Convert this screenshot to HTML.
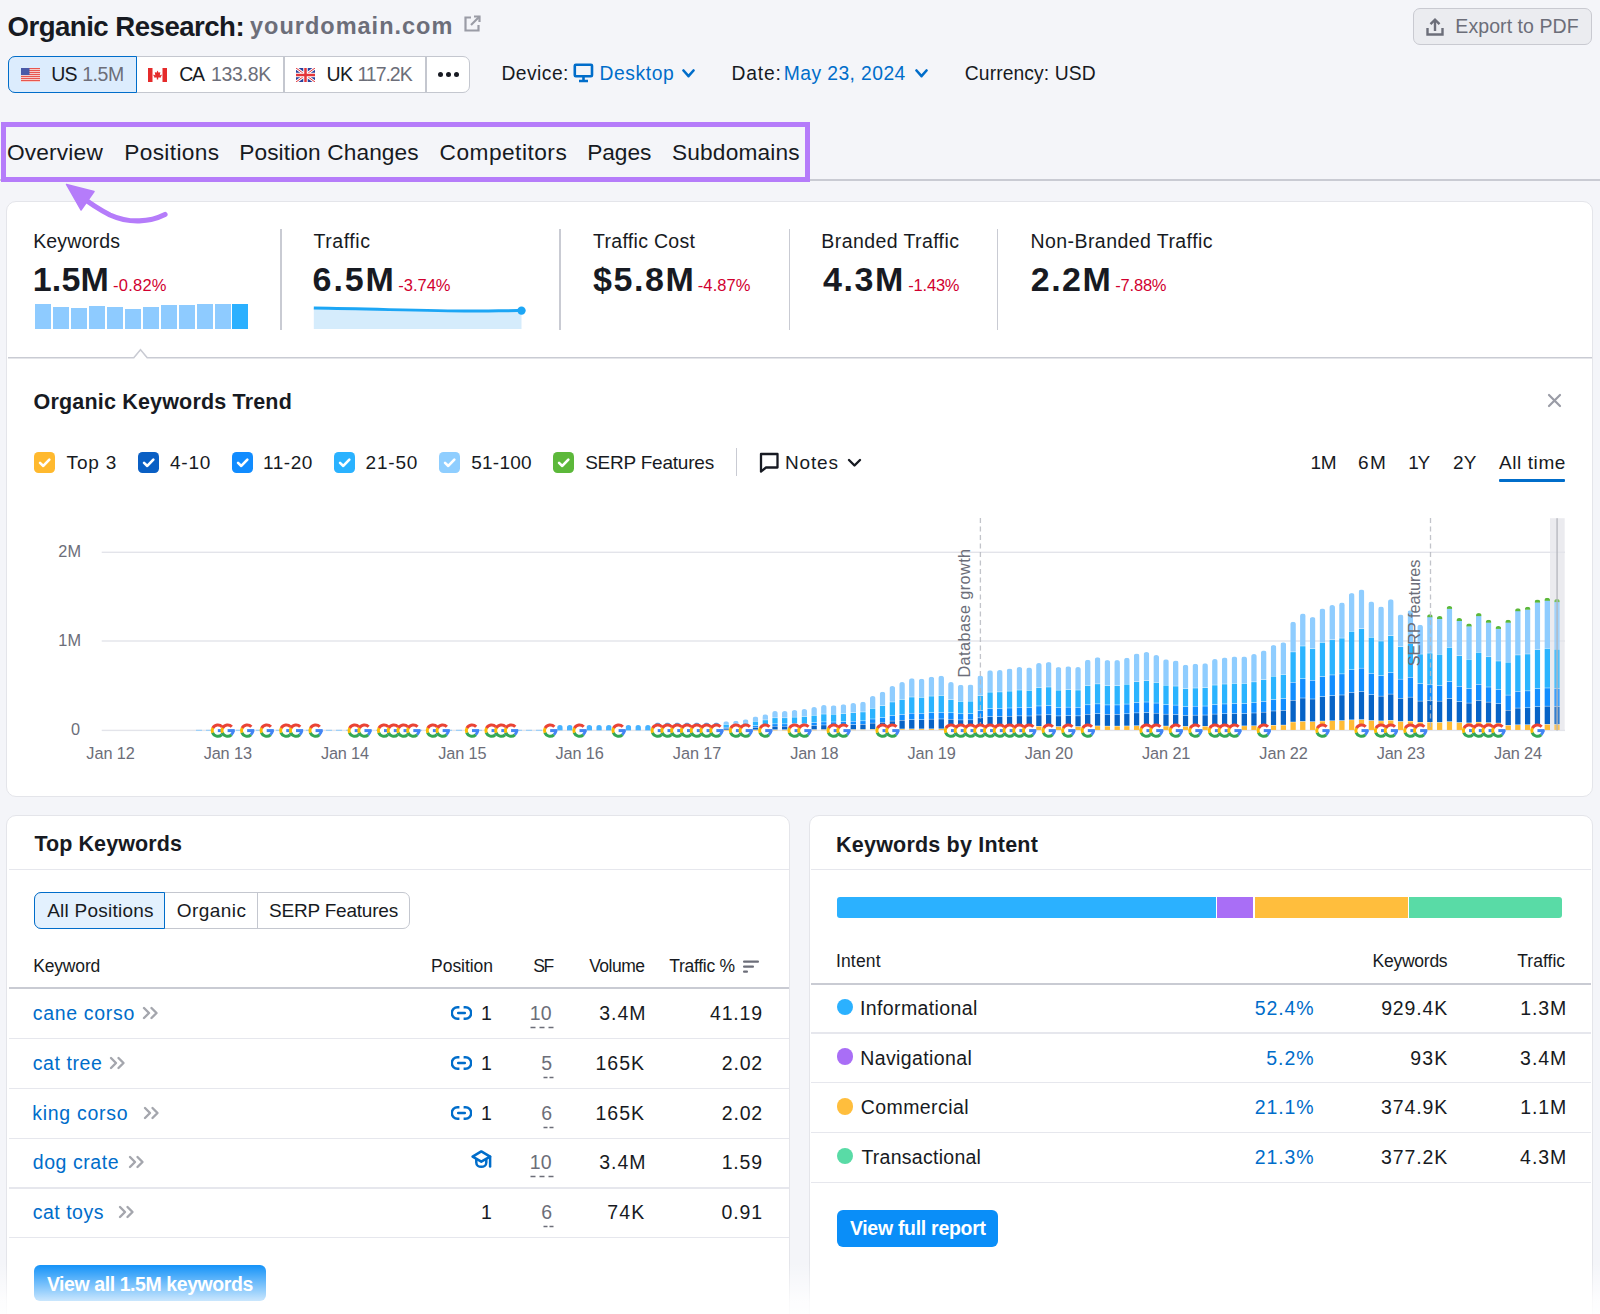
<!DOCTYPE html>
<html><head><meta charset="utf-8"><style>
html,body{margin:0;padding:0;}
body{width:1600px;height:1314px;overflow:hidden;position:relative;background:#f4f5f9;font-family:"Liberation Sans",sans-serif;}
.t{position:absolute;white-space:nowrap;line-height:1;}
</style></head><body>
<div class="t" style="left:7.50px;top:13.24px;font-size:27.6px;color:#171a22;font-weight:700;letter-spacing:-0.515px;">Organic Research:</div>
<div class="t" style="left:250.06px;top:14.51px;font-size:23.5px;color:#6c6e79;font-weight:700;letter-spacing:0.995px;">yourdomain.com</div>
<svg style="position:absolute;left:462px;top:14px" width="20" height="20" viewBox="0 0 20 20" fill="none" stroke="#9a9ca6" stroke-width="2.2">
<path d="M9 3.5H3.5v13h13V11"/><path d="M12 2.5h5.5V8"/><path d="M17.5 2.5L9 11"/></svg>
<div style="position:absolute;left:1413.00px;top:8.00px;width:179.00px;height:36.50px;box-sizing:border-box;border:1.5px solid #c9cad1;border-radius:7px;background:#ebecf0;"></div>
<svg style="position:absolute;left:1425px;top:17px" width="20" height="20" viewBox="0 0 20 20" fill="none" stroke="#6c6e79" stroke-width="2.4">
<path d="M2.5 11v6.5h15V11"/><path d="M10 14V3"/><path d="M5.5 7.2L10 2.7l4.5 4.5"/></svg>
<div class="t" style="left:1455.34px;top:16.59px;font-size:19.5px;color:#6c6e79;letter-spacing:0.073px;">Export to PDF</div>
<div style="position:absolute;left:7.50px;top:56.00px;width:462.00px;height:36.50px;box-sizing:border-box;border:1.5px solid #c4c7cf;border-radius:7px;background:#fff;"></div>
<div style="position:absolute;left:7.50px;top:56.00px;width:129.00px;height:36.50px;box-sizing:border-box;border:1.5px solid #006dca;border-radius:7px 0 0 7px;background:#dcecfd;"></div>
<div style="position:absolute;left:283.00px;top:57.00px;width:1.50px;height:34.50px;background:#c4c7cf;"></div>
<div style="position:absolute;left:425.00px;top:57.00px;width:1.50px;height:34.50px;background:#c4c7cf;"></div>
<svg style="position:absolute;left:21px;top:68.3px" width="19" height="14" viewBox="0 0 19 14"><rect x="0" y="0" width="19" height="1.1" fill="#e8564f"/><rect x="0" y="1.1" width="19" height="0.9" fill="#f7c9c6"/><rect x="0" y="2" width="19" height="1.1" fill="#e8564f"/><rect x="0" y="3.1" width="19" height="0.9" fill="#f7c9c6"/><rect x="0" y="4" width="19" height="1.1" fill="#e8564f"/><rect x="0" y="5.1" width="19" height="0.9" fill="#f7c9c6"/><rect x="0" y="6" width="19" height="1.1" fill="#e8564f"/><rect x="0" y="7.1" width="19" height="0.9" fill="#f7c9c6"/><rect x="0" y="8" width="19" height="1.1" fill="#e8564f"/><rect x="0" y="9.1" width="19" height="0.9" fill="#f7c9c6"/><rect x="0" y="10" width="19" height="1.1" fill="#e8564f"/><rect x="0" y="11.1" width="19" height="0.9" fill="#f7c9c6"/><rect x="0" y="12" width="19" height="1.1" fill="#e8564f"/><rect x="0" y="13.1" width="19" height="0.9" fill="#f7c9c6"/><rect x="0" y="0" width="8.5" height="7" fill="#4a5aa8"/></svg>
<svg style="position:absolute;left:148.4px;top:68.3px" width="19" height="14" viewBox="0 0 19 14">
<rect width="19" height="14" fill="#fff"/><rect width="4.5" height="14" fill="#e52b2b"/><rect x="14.5" width="4.5" height="14" fill="#e52b2b"/>
<path d="M9.5 2.5l1.2 2.3 1.6-.7-.5 3.5 1.6-1 .4 1-1 1.2 .3.8h-2.9v2h-1.4v-2H6l.3-.8-1-1.2.4-1 1.6 1-.5-3.5 1.6.7z" fill="#e52b2b"/></svg>
<svg style="position:absolute;left:296.4px;top:68.3px" width="19" height="14" viewBox="0 0 19 14">
<rect width="19" height="14" fill="#2a3f9c"/><path d="M0 0L19 14M19 0L0 14" stroke="#fff" stroke-width="3"/><path d="M0 0L19 14M19 0L0 14" stroke="#e3343a" stroke-width="1"/>
<path d="M9.5 0v14M0 7h19" stroke="#fff" stroke-width="4.5"/><path d="M9.5 0v14M0 7h19" stroke="#e3343a" stroke-width="2.5"/></svg>
<div class="t" style="left:51.34px;top:65.29px;font-size:19.5px;color:#171a22;letter-spacing:-0.868px;">US</div>
<div class="t" style="left:82.14px;top:65.29px;font-size:19.5px;color:#6c6e79;letter-spacing:-0.389px;">1.5M</div>
<div class="t" style="left:179.29px;top:65.29px;font-size:19.5px;color:#171a22;letter-spacing:-1.365px;">CA</div>
<div class="t" style="left:211.04px;top:65.29px;font-size:19.5px;color:#6c6e79;letter-spacing:-0.332px;">133.8K</div>
<div class="t" style="left:326.54px;top:65.29px;font-size:19.5px;color:#171a22;letter-spacing:-0.650px;">UK</div>
<div class="t" style="left:357.44px;top:65.29px;font-size:19.5px;color:#6c6e79;letter-spacing:-1.019px;">117.2K</div>
<div style="position:absolute;left:437.60px;top:71.80px;width:5.60px;height:5.60px;border-radius:50%;background:#171a22;"></div>
<div style="position:absolute;left:445.60px;top:71.80px;width:5.60px;height:5.60px;border-radius:50%;background:#171a22;"></div>
<div style="position:absolute;left:453.60px;top:71.80px;width:5.60px;height:5.60px;border-radius:50%;background:#171a22;"></div>
<div class="t" style="left:501.46px;top:63.66px;font-size:19.3px;color:#171a22;letter-spacing:0.452px;">Device:</div>
<svg style="position:absolute;left:573px;top:63px" width="21" height="20" viewBox="0 0 21 20" fill="none" stroke="#006dca" stroke-width="2.6">
<rect x="1.8" y="1.8" width="17.2" height="11.5" rx="1"/><path d="M10.5 14v3.5M6 18h9" /></svg>
<div class="t" style="left:599.46px;top:63.66px;font-size:19.3px;color:#006dca;letter-spacing:0.597px;">Desktop</div>
<svg style="position:absolute;left:682px;top:69px" width="13" height="10.2" viewBox="0 0 13 10.2" fill="none" stroke="#006dca" stroke-width="2.6" stroke-linecap="round" stroke-linejoin="round">
<path d="M1.5 1.5L6.5 7.2L11.5 1.5"/></svg>
<div class="t" style="left:731.46px;top:63.66px;font-size:19.3px;color:#171a22;letter-spacing:0.813px;">Date:</div>
<div class="t" style="left:783.76px;top:63.66px;font-size:19.3px;color:#006dca;letter-spacing:0.424px;">May 23, 2024</div>
<svg style="position:absolute;left:915px;top:69px" width="13" height="10.2" viewBox="0 0 13 10.2" fill="none" stroke="#006dca" stroke-width="2.6" stroke-linecap="round" stroke-linejoin="round">
<path d="M1.5 1.5L6.5 7.2L11.5 1.5"/></svg>
<div class="t" style="left:964.83px;top:63.66px;font-size:19.3px;color:#171a22;letter-spacing:0.095px;">Currency: USD</div>
<div style="position:absolute;left:0.00px;top:179.00px;width:1600.00px;height:1.50px;background:#c9cbd3;"></div>
<div style="position:absolute;left:1.20px;top:121.50px;width:808.40px;height:60.00px;box-sizing:border-box;border:5px solid #b57cfa;"></div>
<div class="t" style="left:6.88px;top:140.78px;font-size:22.7px;color:#171a22;letter-spacing:0.195px;">Overview</div>
<div class="t" style="left:124.18px;top:140.78px;font-size:22.7px;color:#171a22;letter-spacing:0.356px;">Positions</div>
<div class="t" style="left:239.18px;top:140.78px;font-size:22.7px;color:#171a22;letter-spacing:0.110px;">Position Changes</div>
<div class="t" style="left:439.56px;top:140.78px;font-size:22.7px;color:#171a22;letter-spacing:0.488px;">Competitors</div>
<div class="t" style="left:587.18px;top:140.78px;font-size:22.7px;color:#171a22;letter-spacing:-0.036px;">Pages</div>
<div class="t" style="left:671.98px;top:140.78px;font-size:22.7px;color:#171a22;letter-spacing:0.178px;">Subdomains</div>
<div style="position:absolute;left:6.40px;top:200.70px;width:1586.40px;height:596.50px;box-sizing:border-box;border:1.3px solid #e4e5ea;border-radius:10px;background:#fff;"></div>
<div class="t" style="left:33.14px;top:231.69px;font-size:19.5px;color:#171a22;letter-spacing:0.191px;">Keywords</div>
<div class="t" style="left:313.41px;top:231.69px;font-size:19.5px;color:#171a22;letter-spacing:0.590px;">Traffic</div>
<div class="t" style="left:593.11px;top:231.69px;font-size:19.5px;color:#171a22;letter-spacing:0.292px;">Traffic Cost</div>
<div class="t" style="left:821.34px;top:231.69px;font-size:19.5px;color:#171a22;letter-spacing:0.409px;">Branded Traffic</div>
<div class="t" style="left:1030.44px;top:231.69px;font-size:19.5px;color:#171a22;letter-spacing:0.440px;">Non-Branded Traffic</div>
<div class="t" style="left:32.66px;top:262.22px;font-size:34px;color:#171a22;font-weight:700;letter-spacing:0.190px;">1.5M</div>
<div class="t" style="left:312.61px;top:262.22px;font-size:34px;color:#171a22;font-weight:700;letter-spacing:1.907px;">6.5M</div>
<div class="t" style="left:592.99px;top:262.22px;font-size:34px;color:#171a22;font-weight:700;letter-spacing:1.593px;">$5.8M</div>
<div class="t" style="left:822.99px;top:262.22px;font-size:34px;color:#171a22;font-weight:700;letter-spacing:1.580px;">4.3M</div>
<div class="t" style="left:1030.81px;top:262.22px;font-size:34px;color:#171a22;font-weight:700;letter-spacing:1.440px;">2.2M</div>
<div class="t" style="left:113.06px;top:277.03px;font-size:16.5px;color:#d1002f;letter-spacing:0.243px;">-0.82%</div>
<div class="t" style="left:398.26px;top:277.03px;font-size:16.5px;color:#d1002f;">-3.74%</div>
<div class="t" style="left:697.76px;top:277.03px;font-size:16.5px;color:#d1002f;letter-spacing:0.103px;">-4.87%</div>
<div class="t" style="left:908.26px;top:277.03px;font-size:16.5px;color:#d1002f;letter-spacing:-0.197px;">-1.43%</div>
<div class="t" style="left:1115.26px;top:277.03px;font-size:16.5px;color:#d1002f;letter-spacing:-0.197px;">-7.88%</div>
<div style="position:absolute;left:280.05px;top:228.60px;width:1.50px;height:101.40px;background:#c9cbd3;"></div>
<div style="position:absolute;left:559.05px;top:228.60px;width:1.50px;height:101.40px;background:#c9cbd3;"></div>
<div style="position:absolute;left:788.75px;top:228.60px;width:1.50px;height:101.40px;background:#c9cbd3;"></div>
<div style="position:absolute;left:996.95px;top:228.60px;width:1.50px;height:101.40px;background:#c9cbd3;"></div>
<div style="position:absolute;left:34.70px;top:304.40px;width:16.00px;height:24.60px;background:#8ecbff;"></div>
<div style="position:absolute;left:52.68px;top:307.00px;width:16.00px;height:22.00px;background:#8ecbff;"></div>
<div style="position:absolute;left:70.66px;top:308.00px;width:16.00px;height:21.00px;background:#8ecbff;"></div>
<div style="position:absolute;left:88.64px;top:306.00px;width:16.00px;height:23.00px;background:#8ecbff;"></div>
<div style="position:absolute;left:106.62px;top:307.00px;width:16.00px;height:22.00px;background:#8ecbff;"></div>
<div style="position:absolute;left:124.60px;top:308.50px;width:16.00px;height:20.50px;background:#8ecbff;"></div>
<div style="position:absolute;left:142.58px;top:307.00px;width:16.00px;height:22.00px;background:#8ecbff;"></div>
<div style="position:absolute;left:160.56px;top:304.70px;width:16.00px;height:24.30px;background:#8ecbff;"></div>
<div style="position:absolute;left:178.54px;top:304.70px;width:16.00px;height:24.30px;background:#8ecbff;"></div>
<div style="position:absolute;left:196.52px;top:303.80px;width:16.00px;height:25.20px;background:#8ecbff;"></div>
<div style="position:absolute;left:214.50px;top:303.80px;width:16.00px;height:25.20px;background:#8ecbff;"></div>
<div style="position:absolute;left:232.48px;top:303.80px;width:16.00px;height:25.20px;background:#2bb0ff;"></div>
<svg style="position:absolute;left:0;top:290px" width="560" height="45" viewBox="0 290 560 45">
<path d="M313.8 308 C380 309 440 311.5 480 311 C500 310.8 510 310.5 521.5 310.6 L521.5 329 L313.8 329 Z" fill="#d5ecfc"/>
<path d="M313.8 308 C380 309 440 311.5 480 311 C500 310.8 510 310.5 521.5 310.6" fill="none" stroke="#1ca6f5" stroke-width="3"/>
<circle cx="521.5" cy="310.6" r="4.2" fill="#1ca6f5"/></svg>
<svg style="position:absolute;left:7.5px;top:345px" width="1584.5" height="16" viewBox="7.5 345 1584.5 16">
<path d="M7.5 357.8 L133.3 357.8 L140 349.8 L146.7 357.8 L1592 357.8" fill="none" stroke="#c9cbd3" stroke-width="1.6"/>
<path d="M134.3 358.6 L140 351.6 L145.7 358.6 Z" fill="#fff"/></svg>
<svg style="position:absolute;left:0;top:175px" width="200" height="60" viewBox="0 175 200 60">
<path d="M165 214.5 C150 222 130 224 110 215 C98 209 88 202 76 193" fill="none" stroke="#b57cfa" stroke-width="5.2" stroke-linecap="round"/>
<path d="M66.5 184.5 L94 191.5 L81 210 Z" fill="#b57cfa" stroke="#b57cfa" stroke-width="1.5" stroke-linejoin="round"/></svg>
<div class="t" style="left:33.54px;top:392.00px;font-size:21.5px;color:#171a22;font-weight:700;letter-spacing:0.181px;">Organic Keywords Trend</div>
<svg style="position:absolute;left:1547px;top:393px" width="15" height="15" viewBox="0 0 15 15" stroke="#9a9ca6" stroke-width="2.2" stroke-linecap="round"><path d="M2 2L13 13M13 2L2 13"/></svg>
<div style="position:absolute;left:34.00px;top:452.00px;width:21.20px;height:21.20px;border-radius:4.5px;background:#ffb92e;"></div>
<svg style="position:absolute;left:34px;top:452px" width="21.2" height="21.2" viewBox="0 0 21 21" fill="none" stroke="#fff" stroke-width="2.6" stroke-linecap="round" stroke-linejoin="round"><path d="M6 10.8L9.2 13.8L15.2 7.6"/></svg>
<div class="t" style="left:66.62px;top:452.52px;font-size:19px;color:#171a22;letter-spacing:0.821px;">Top 3</div>
<div style="position:absolute;left:137.60px;top:452.00px;width:21.20px;height:21.20px;border-radius:4.5px;background:#0a5fc4;"></div>
<svg style="position:absolute;left:137.6px;top:452px" width="21.2" height="21.2" viewBox="0 0 21 21" fill="none" stroke="#fff" stroke-width="2.6" stroke-linecap="round" stroke-linejoin="round"><path d="M6 10.8L9.2 13.8L15.2 7.6"/></svg>
<div class="t" style="left:170.02px;top:452.52px;font-size:19px;color:#171a22;letter-spacing:0.748px;">4-10</div>
<div style="position:absolute;left:232.00px;top:452.00px;width:21.20px;height:21.20px;border-radius:4.5px;background:#118cff;"></div>
<svg style="position:absolute;left:232px;top:452px" width="21.2" height="21.2" viewBox="0 0 21 21" fill="none" stroke="#fff" stroke-width="2.6" stroke-linecap="round" stroke-linejoin="round"><path d="M6 10.8L9.2 13.8L15.2 7.6"/></svg>
<div class="t" style="left:262.97px;top:452.52px;font-size:19px;color:#171a22;letter-spacing:0.543px;">11-20</div>
<div style="position:absolute;left:334.00px;top:452.00px;width:21.20px;height:21.20px;border-radius:4.5px;background:#2ab2ff;"></div>
<svg style="position:absolute;left:334px;top:452px" width="21.2" height="21.2" viewBox="0 0 21 21" fill="none" stroke="#fff" stroke-width="2.6" stroke-linecap="round" stroke-linejoin="round"><path d="M6 10.8L9.2 13.8L15.2 7.6"/></svg>
<div class="t" style="left:365.55px;top:452.52px;font-size:19px;color:#171a22;letter-spacing:0.793px;">21-50</div>
<div style="position:absolute;left:439.00px;top:452.00px;width:21.20px;height:21.20px;border-radius:4.5px;background:#8fceff;"></div>
<svg style="position:absolute;left:439px;top:452px" width="21.2" height="21.2" viewBox="0 0 21 21" fill="none" stroke="#fff" stroke-width="2.6" stroke-linecap="round" stroke-linejoin="round"><path d="M6 10.8L9.2 13.8L15.2 7.6"/></svg>
<div class="t" style="left:471.24px;top:452.52px;font-size:19px;color:#171a22;letter-spacing:0.248px;">51-100</div>
<div style="position:absolute;left:553.00px;top:452.00px;width:21.20px;height:21.20px;border-radius:4.5px;background:#5cb83a;"></div>
<svg style="position:absolute;left:553px;top:452px" width="21.2" height="21.2" viewBox="0 0 21 21" fill="none" stroke="#fff" stroke-width="2.6" stroke-linecap="round" stroke-linejoin="round"><path d="M6 10.8L9.2 13.8L15.2 7.6"/></svg>
<div class="t" style="left:585.14px;top:452.52px;font-size:19px;color:#171a22;letter-spacing:-0.221px;">SERP Features</div>
<div style="position:absolute;left:736.00px;top:448.40px;width:1.30px;height:27.60px;background:#c9cbd3;"></div>
<svg style="position:absolute;left:758px;top:451px" width="22" height="23" viewBox="0 0 22 23" fill="none" stroke="#171a22" stroke-width="2.3" stroke-linejoin="round"><path d="M3 3H19.5V16.5H8L3 20.5Z"/></svg>
<div class="t" style="left:785.08px;top:452.52px;font-size:19px;color:#171a22;letter-spacing:0.824px;">Notes</div>
<svg style="position:absolute;left:847px;top:458px" width="15" height="10" viewBox="0 0 15 10" fill="none" stroke="#171a22" stroke-width="2.4" stroke-linecap="round" stroke-linejoin="round"><path d="M2 2L7.5 7.5L13 2"/></svg>
<div class="t" style="left:1310.38px;top:453.42px;font-size:19px;color:#171a22;letter-spacing:-0.270px;">1M</div>
<div class="t" style="left:1358.06px;top:453.42px;font-size:19px;color:#171a22;letter-spacing:1.330px;">6M</div>
<div class="t" style="left:1408.20px;top:453.42px;font-size:19px;color:#171a22;letter-spacing:-1.330px;">1Y</div>
<div class="t" style="left:1452.95px;top:453.42px;font-size:19px;color:#171a22;letter-spacing:0.250px;">2Y</div>
<div class="t" style="left:1499.00px;top:453.42px;font-size:19px;color:#171a22;letter-spacing:0.590px;">All time</div>
<div style="position:absolute;left:1499.00px;top:478.80px;width:66.00px;height:3.70px;background:#006dca;border-radius:1px;"></div>
<div class="t" style="left:58.33px;top:543.20px;font-size:16.3px;color:#6c6e79;">2M</div>
<div class="t" style="left:58.33px;top:631.80px;font-size:16.3px;color:#6c6e79;">1M</div>
<div class="t" style="left:71.12px;top:721.00px;font-size:16.3px;color:#6c6e79;">0</div>
<div class="t" style="left:86.36px;top:744.90px;font-size:16.3px;color:#6c6e79;letter-spacing:-0.088px;">Jan 12</div>
<div class="t" style="left:203.66px;top:744.90px;font-size:16.3px;color:#6c6e79;letter-spacing:-0.121px;">Jan 13</div>
<div class="t" style="left:320.96px;top:744.90px;font-size:16.3px;color:#6c6e79;letter-spacing:-0.153px;">Jan 14</div>
<div class="t" style="left:438.26px;top:744.90px;font-size:16.3px;color:#6c6e79;letter-spacing:-0.121px;">Jan 15</div>
<div class="t" style="left:555.56px;top:744.90px;font-size:16.3px;color:#6c6e79;letter-spacing:-0.121px;">Jan 16</div>
<div class="t" style="left:672.86px;top:744.90px;font-size:16.3px;color:#6c6e79;letter-spacing:-0.088px;">Jan 17</div>
<div class="t" style="left:790.16px;top:744.90px;font-size:16.3px;color:#6c6e79;letter-spacing:-0.121px;">Jan 18</div>
<div class="t" style="left:907.46px;top:744.90px;font-size:16.3px;color:#6c6e79;letter-spacing:-0.104px;">Jan 19</div>
<div class="t" style="left:1024.76px;top:744.90px;font-size:16.3px;color:#6c6e79;letter-spacing:-0.137px;">Jan 20</div>
<div class="t" style="left:1142.06px;top:744.90px;font-size:16.3px;color:#6c6e79;letter-spacing:-0.104px;">Jan 21</div>
<div class="t" style="left:1259.36px;top:744.90px;font-size:16.3px;color:#6c6e79;letter-spacing:-0.088px;">Jan 22</div>
<div class="t" style="left:1376.66px;top:744.90px;font-size:16.3px;color:#6c6e79;letter-spacing:-0.121px;">Jan 23</div>
<div class="t" style="left:1493.96px;top:744.90px;font-size:16.3px;color:#6c6e79;letter-spacing:-0.153px;">Jan 24</div>
<svg style="position:absolute;left:0;top:500px" width="1600" height="250" viewBox="0 500 1600 250">
<defs><g id="gg"><circle cx="0" cy="0" r="6" fill="#fff"/><path d="M5.65 -0.20A5.65 5.65 0 0 1 3.63 4.33" fill="none" stroke="#4285f4" stroke-width="3.0"/><path d="M3.78 4.20A5.65 5.65 0 0 1 -5.31 1.93" fill="none" stroke="#34a853" stroke-width="3.0"/><path d="M-5.24 2.12A5.65 5.65 0 0 1 -4.89 -2.83" fill="none" stroke="#fbbc05" stroke-width="3.0"/><path d="M-4.99 -2.65A5.65 5.65 0 0 1 4.20 -3.78" fill="none" stroke="#ea4335" stroke-width="3.0"/><rect x="0" y="-1.5" width="7.1" height="3" fill="#4285f4"/></g></defs>
<rect x="1550" y="518.2" width="14.7" height="212.4" fill="#ebebef"/>
<rect x="101.7" y="551.5999999999999" width="1463.3" height="1.4" fill="#e3e4ea"/>
<rect x="101.7" y="640.3" width="1463.3" height="1.4" fill="#e3e4ea"/>
<rect x="101.7" y="729.6999999999999" width="1463.3" height="1.4" fill="#e3e4ea"/>
<path d="M196 730.4H548" stroke="#9fd0f8" stroke-width="1.3" stroke-dasharray="6 4"/>
<g clip-path="url(#c45)"><clipPath id="c45"><rect x="547.38" y="724.90" width="5.6" height="9.50" rx="2.8"/></clipPath><rect x="547.38" y="724.90" width="5.6" height="5.50" fill="#47b2ff"/></g>
<g clip-path="url(#c46)"><clipPath id="c46"><rect x="557.15" y="724.90" width="5.6" height="9.50" rx="2.8"/></clipPath><rect x="557.15" y="724.90" width="5.6" height="5.50" fill="#47b2ff"/></g>
<g clip-path="url(#c47)"><clipPath id="c47"><rect x="566.93" y="724.90" width="5.6" height="9.50" rx="2.8"/></clipPath><rect x="566.93" y="724.90" width="5.6" height="5.50" fill="#47b2ff"/></g>
<g clip-path="url(#c48)"><clipPath id="c48"><rect x="576.70" y="724.90" width="5.6" height="9.50" rx="2.8"/></clipPath><rect x="576.70" y="724.90" width="5.6" height="5.50" fill="#47b2ff"/></g>
<g clip-path="url(#c49)"><clipPath id="c49"><rect x="586.48" y="724.90" width="5.6" height="9.50" rx="2.8"/></clipPath><rect x="586.48" y="724.90" width="5.6" height="5.50" fill="#47b2ff"/></g>
<g clip-path="url(#c50)"><clipPath id="c50"><rect x="596.25" y="724.90" width="5.6" height="9.50" rx="2.8"/></clipPath><rect x="596.25" y="724.90" width="5.6" height="5.50" fill="#47b2ff"/></g>
<g clip-path="url(#c51)"><clipPath id="c51"><rect x="606.03" y="724.90" width="5.6" height="9.50" rx="2.8"/></clipPath><rect x="606.03" y="724.90" width="5.6" height="5.50" fill="#47b2ff"/></g>
<g clip-path="url(#c52)"><clipPath id="c52"><rect x="615.80" y="724.90" width="5.6" height="9.50" rx="2.8"/></clipPath><rect x="615.80" y="724.90" width="5.6" height="5.50" fill="#47b2ff"/></g>
<g clip-path="url(#c53)"><clipPath id="c53"><rect x="625.58" y="724.90" width="5.6" height="9.50" rx="2.8"/></clipPath><rect x="625.58" y="724.90" width="5.6" height="5.50" fill="#47b2ff"/></g>
<g clip-path="url(#c54)"><clipPath id="c54"><rect x="635.35" y="724.90" width="5.6" height="9.50" rx="2.8"/></clipPath><rect x="635.35" y="724.90" width="5.6" height="5.50" fill="#47b2ff"/></g>
<g clip-path="url(#c55)"><clipPath id="c55"><rect x="645.12" y="724.90" width="5.6" height="9.50" rx="2.8"/></clipPath><rect x="645.12" y="724.90" width="5.6" height="5.50" fill="#47b2ff"/></g>
<g clip-path="url(#c56)"><clipPath id="c56"><rect x="654.90" y="722.40" width="5.6" height="12.00" rx="2.8"/></clipPath><rect x="654.90" y="722.40" width="5.6" height="8.00" fill="#47b2ff"/></g>
<g clip-path="url(#c57)"><clipPath id="c57"><rect x="664.68" y="722.40" width="5.6" height="12.00" rx="2.8"/></clipPath><rect x="664.68" y="722.40" width="5.6" height="8.00" fill="#47b2ff"/></g>
<g clip-path="url(#c58)"><clipPath id="c58"><rect x="674.45" y="722.40" width="5.6" height="12.00" rx="2.8"/></clipPath><rect x="674.45" y="722.40" width="5.6" height="8.00" fill="#47b2ff"/></g>
<g clip-path="url(#c59)"><clipPath id="c59"><rect x="684.23" y="722.40" width="5.6" height="12.00" rx="2.8"/></clipPath><rect x="684.23" y="722.40" width="5.6" height="8.00" fill="#47b2ff"/></g>
<g clip-path="url(#c60)"><clipPath id="c60"><rect x="694.00" y="722.40" width="5.6" height="12.00" rx="2.8"/></clipPath><rect x="694.00" y="722.40" width="5.6" height="8.00" fill="#47b2ff"/></g>
<g clip-path="url(#c61)"><clipPath id="c61"><rect x="703.77" y="722.40" width="5.6" height="12.00" rx="2.8"/></clipPath><rect x="703.77" y="722.40" width="5.6" height="8.00" fill="#47b2ff"/></g>
<g clip-path="url(#c62)"><clipPath id="c62"><rect x="713.55" y="722.40" width="5.6" height="12.00" rx="2.8"/></clipPath><rect x="713.55" y="722.40" width="5.6" height="8.00" fill="#47b2ff"/></g>
<g clip-path="url(#c63)"><clipPath id="c63"><rect x="723.33" y="721.20" width="5.6" height="13.20" rx="2.8"/></clipPath><rect x="723.33" y="730.17" width="5.6" height="0.40" fill="#ffbb36"/><rect x="723.33" y="728.51" width="5.6" height="1.21" fill="#0763c6"/><rect x="723.33" y="727.41" width="5.6" height="0.65" fill="#128eff"/><rect x="723.33" y="724.56" width="5.6" height="2.40" fill="#2bb4ff"/><rect x="723.33" y="721.20" width="5.6" height="2.91" fill="#8fcdff"/></g>
<g clip-path="url(#c64)"><clipPath id="c64"><rect x="733.10" y="720.80" width="5.6" height="13.60" rx="2.8"/></clipPath><rect x="733.10" y="730.16" width="5.6" height="0.40" fill="#ffbb36"/><rect x="733.10" y="728.43" width="5.6" height="1.28" fill="#0763c6"/><rect x="733.10" y="727.28" width="5.6" height="0.70" fill="#128eff"/><rect x="733.10" y="724.30" width="5.6" height="2.53" fill="#2bb4ff"/><rect x="733.10" y="720.80" width="5.6" height="3.05" fill="#8fcdff"/></g>
<g clip-path="url(#c65)"><clipPath id="c65"><rect x="742.88" y="719.30" width="5.6" height="15.10" rx="2.8"/></clipPath><rect x="742.88" y="730.12" width="5.6" height="0.40" fill="#ffbb36"/><rect x="742.88" y="728.12" width="5.6" height="1.55" fill="#0763c6"/><rect x="742.88" y="726.79" width="5.6" height="0.88" fill="#128eff"/><rect x="742.88" y="723.35" width="5.6" height="2.99" fill="#2bb4ff"/><rect x="742.88" y="719.30" width="5.6" height="3.60" fill="#8fcdff"/></g>
<g clip-path="url(#c66)"><clipPath id="c66"><rect x="752.65" y="716.40" width="5.6" height="18.00" rx="2.8"/></clipPath><rect x="752.65" y="730.05" width="5.6" height="0.40" fill="#ffbb36"/><rect x="752.65" y="727.53" width="5.6" height="2.07" fill="#0763c6"/><rect x="752.65" y="725.85" width="5.6" height="1.23" fill="#128eff"/><rect x="752.65" y="721.51" width="5.6" height="3.89" fill="#2bb4ff"/><rect x="752.65" y="716.40" width="5.6" height="4.66" fill="#8fcdff"/></g>
<g clip-path="url(#c67)"><clipPath id="c67"><rect x="762.43" y="714.30" width="5.6" height="20.10" rx="2.8"/></clipPath><rect x="762.43" y="730.00" width="5.6" height="0.40" fill="#ffbb36"/><rect x="762.43" y="727.10" width="5.6" height="2.45" fill="#0763c6"/><rect x="762.43" y="725.17" width="5.6" height="1.48" fill="#128eff"/><rect x="762.43" y="720.18" width="5.6" height="4.54" fill="#2bb4ff"/><rect x="762.43" y="714.30" width="5.6" height="5.43" fill="#8fcdff"/></g>
<g clip-path="url(#c68)"><clipPath id="c68"><rect x="772.20" y="711.00" width="5.6" height="23.40" rx="2.8"/></clipPath><rect x="772.20" y="729.91" width="5.6" height="0.40" fill="#ffbb36"/><rect x="772.20" y="726.42" width="5.6" height="3.04" fill="#0763c6"/><rect x="772.20" y="724.10" width="5.6" height="1.88" fill="#128eff"/><rect x="772.20" y="718.08" width="5.6" height="5.56" fill="#2bb4ff"/><rect x="772.20" y="711.00" width="5.6" height="6.63" fill="#8fcdff"/></g>
<g clip-path="url(#c69)"><clipPath id="c69"><rect x="781.98" y="711.00" width="5.6" height="23.40" rx="2.8"/></clipPath><rect x="781.98" y="729.91" width="5.6" height="0.40" fill="#ffbb36"/><rect x="781.98" y="726.42" width="5.6" height="3.04" fill="#0763c6"/><rect x="781.98" y="724.10" width="5.6" height="1.88" fill="#128eff"/><rect x="781.98" y="718.08" width="5.6" height="5.56" fill="#2bb4ff"/><rect x="781.98" y="711.00" width="5.6" height="6.63" fill="#8fcdff"/></g>
<g clip-path="url(#c70)"><clipPath id="c70"><rect x="791.75" y="709.90" width="5.6" height="24.50" rx="2.8"/></clipPath><rect x="791.75" y="729.89" width="5.6" height="0.40" fill="#ffbb36"/><rect x="791.75" y="726.20" width="5.6" height="3.24" fill="#0763c6"/><rect x="791.75" y="723.74" width="5.6" height="2.01" fill="#128eff"/><rect x="791.75" y="717.38" width="5.6" height="5.90" fill="#2bb4ff"/><rect x="791.75" y="709.90" width="5.6" height="7.03" fill="#8fcdff"/></g>
<g clip-path="url(#c71)"><clipPath id="c71"><rect x="801.52" y="709.00" width="5.6" height="25.40" rx="2.8"/></clipPath><rect x="801.52" y="729.87" width="5.6" height="0.40" fill="#ffbb36"/><rect x="801.52" y="726.01" width="5.6" height="3.40" fill="#0763c6"/><rect x="801.52" y="723.45" width="5.6" height="2.12" fill="#128eff"/><rect x="801.52" y="716.81" width="5.6" height="6.18" fill="#2bb4ff"/><rect x="801.52" y="709.00" width="5.6" height="7.36" fill="#8fcdff"/></g>
<g clip-path="url(#c72)"><clipPath id="c72"><rect x="811.30" y="707.00" width="5.6" height="27.40" rx="2.8"/></clipPath><rect x="811.30" y="729.81" width="5.6" height="0.40" fill="#ffbb36"/><rect x="811.30" y="725.60" width="5.6" height="3.76" fill="#0763c6"/><rect x="811.30" y="722.79" width="5.6" height="2.36" fill="#128eff"/><rect x="811.30" y="715.54" width="5.6" height="6.80" fill="#2bb4ff"/><rect x="811.30" y="707.00" width="5.6" height="8.09" fill="#8fcdff"/></g>
<g clip-path="url(#c73)"><clipPath id="c73"><rect x="821.08" y="705.00" width="5.6" height="29.40" rx="2.8"/></clipPath><rect x="821.08" y="729.76" width="5.6" height="0.40" fill="#ffbb36"/><rect x="821.08" y="725.19" width="5.6" height="4.12" fill="#0763c6"/><rect x="821.08" y="722.14" width="5.6" height="2.60" fill="#128eff"/><rect x="821.08" y="714.27" width="5.6" height="7.42" fill="#2bb4ff"/><rect x="821.08" y="705.00" width="5.6" height="8.82" fill="#8fcdff"/></g>
<g clip-path="url(#c74)"><clipPath id="c74"><rect x="830.85" y="705.30" width="5.6" height="29.10" rx="2.8"/></clipPath><rect x="830.85" y="729.77" width="5.6" height="0.40" fill="#ffbb36"/><rect x="830.85" y="725.25" width="5.6" height="4.07" fill="#0763c6"/><rect x="830.85" y="722.24" width="5.6" height="2.56" fill="#128eff"/><rect x="830.85" y="714.46" width="5.6" height="7.33" fill="#2bb4ff"/><rect x="830.85" y="705.30" width="5.6" height="8.71" fill="#8fcdff"/></g>
<g clip-path="url(#c75)"><clipPath id="c75"><rect x="840.62" y="704.20" width="5.6" height="30.20" rx="2.8"/></clipPath><rect x="840.62" y="729.75" width="5.6" height="0.40" fill="#ffbb36"/><rect x="840.62" y="725.03" width="5.6" height="4.27" fill="#0763c6"/><rect x="840.62" y="721.88" width="5.6" height="2.69" fill="#128eff"/><rect x="840.62" y="713.76" width="5.6" height="7.67" fill="#2bb4ff"/><rect x="840.62" y="704.20" width="5.6" height="9.11" fill="#8fcdff"/></g>
<g clip-path="url(#c76)"><clipPath id="c76"><rect x="850.40" y="703.00" width="5.6" height="31.40" rx="2.8"/></clipPath><rect x="850.40" y="729.72" width="5.6" height="0.40" fill="#ffbb36"/><rect x="850.40" y="724.78" width="5.6" height="4.48" fill="#0763c6"/><rect x="850.40" y="721.50" width="5.6" height="2.84" fill="#128eff"/><rect x="850.40" y="713.00" width="5.6" height="8.04" fill="#2bb4ff"/><rect x="850.40" y="703.00" width="5.6" height="9.55" fill="#8fcdff"/></g>
<g clip-path="url(#c77)"><clipPath id="c77"><rect x="860.18" y="701.70" width="5.6" height="32.70" rx="2.8"/></clipPath><rect x="860.18" y="729.68" width="5.6" height="0.40" fill="#ffbb36"/><rect x="860.18" y="724.52" width="5.6" height="4.72" fill="#0763c6"/><rect x="860.18" y="721.07" width="5.6" height="2.99" fill="#128eff"/><rect x="860.18" y="712.18" width="5.6" height="8.45" fill="#2bb4ff"/><rect x="860.18" y="701.70" width="5.6" height="10.03" fill="#8fcdff"/></g>
<g clip-path="url(#c78)"><clipPath id="c78"><rect x="869.95" y="696.00" width="5.6" height="38.40" rx="2.8"/></clipPath><rect x="869.95" y="729.54" width="5.6" height="0.41" fill="#ffbb36"/><rect x="869.95" y="723.35" width="5.6" height="5.74" fill="#0763c6"/><rect x="869.95" y="719.22" width="5.6" height="3.68" fill="#128eff"/><rect x="869.95" y="708.56" width="5.6" height="10.21" fill="#2bb4ff"/><rect x="869.95" y="696.00" width="5.6" height="12.11" fill="#8fcdff"/></g>
<g clip-path="url(#c79)"><clipPath id="c79"><rect x="879.73" y="691.70" width="5.6" height="42.70" rx="2.8"/></clipPath><rect x="879.73" y="729.43" width="5.6" height="0.52" fill="#ffbb36"/><rect x="879.73" y="722.47" width="5.6" height="6.52" fill="#0763c6"/><rect x="879.73" y="717.82" width="5.6" height="4.19" fill="#128eff"/><rect x="879.73" y="705.83" width="5.6" height="11.55" fill="#2bb4ff"/><rect x="879.73" y="691.70" width="5.6" height="13.68" fill="#8fcdff"/></g>
<g clip-path="url(#c80)"><clipPath id="c80"><rect x="889.50" y="686.00" width="5.6" height="48.40" rx="2.8"/></clipPath><rect x="889.50" y="729.29" width="5.6" height="0.66" fill="#ffbb36"/><rect x="889.50" y="721.30" width="5.6" height="7.54" fill="#0763c6"/><rect x="889.50" y="715.97" width="5.6" height="4.88" fill="#128eff"/><rect x="889.50" y="702.21" width="5.6" height="13.31" fill="#2bb4ff"/><rect x="889.50" y="686.00" width="5.6" height="15.76" fill="#8fcdff"/></g>
<g clip-path="url(#c81)"><clipPath id="c81"><rect x="899.27" y="682.00" width="5.6" height="52.40" rx="2.8"/></clipPath><rect x="899.27" y="729.19" width="5.6" height="0.76" fill="#ffbb36"/><rect x="899.27" y="720.48" width="5.6" height="8.26" fill="#0763c6"/><rect x="899.27" y="714.67" width="5.6" height="5.36" fill="#128eff"/><rect x="899.27" y="699.67" width="5.6" height="14.55" fill="#2bb4ff"/><rect x="899.27" y="682.00" width="5.6" height="17.22" fill="#8fcdff"/></g>
<g clip-path="url(#c82)"><clipPath id="c82"><rect x="909.05" y="678.20" width="5.6" height="56.20" rx="2.8"/></clipPath><rect x="909.05" y="729.10" width="5.6" height="0.85" fill="#ffbb36"/><rect x="909.05" y="719.70" width="5.6" height="8.95" fill="#0763c6"/><rect x="909.05" y="713.44" width="5.6" height="5.81" fill="#128eff"/><rect x="909.05" y="697.25" width="5.6" height="15.73" fill="#2bb4ff"/><rect x="909.05" y="678.20" width="5.6" height="18.60" fill="#8fcdff"/></g>
<g clip-path="url(#c83)"><clipPath id="c83"><rect x="918.83" y="678.70" width="5.6" height="55.70" rx="2.8"/></clipPath><rect x="918.83" y="729.11" width="5.6" height="0.84" fill="#ffbb36"/><rect x="918.83" y="719.80" width="5.6" height="8.86" fill="#0763c6"/><rect x="918.83" y="713.60" width="5.6" height="5.75" fill="#128eff"/><rect x="918.83" y="697.57" width="5.6" height="15.58" fill="#2bb4ff"/><rect x="918.83" y="678.70" width="5.6" height="18.42" fill="#8fcdff"/></g>
<g clip-path="url(#c84)"><clipPath id="c84"><rect x="928.60" y="676.70" width="5.6" height="57.70" rx="2.8"/></clipPath><rect x="928.60" y="729.06" width="5.6" height="0.89" fill="#ffbb36"/><rect x="928.60" y="719.39" width="5.6" height="9.22" fill="#0763c6"/><rect x="928.60" y="712.95" width="5.6" height="5.99" fill="#128eff"/><rect x="928.60" y="696.30" width="5.6" height="16.20" fill="#2bb4ff"/><rect x="928.60" y="676.70" width="5.6" height="19.15" fill="#8fcdff"/></g>
<g clip-path="url(#c85)"><clipPath id="c85"><rect x="938.38" y="675.70" width="5.6" height="58.70" rx="2.8"/></clipPath><rect x="938.38" y="729.03" width="5.6" height="0.92" fill="#ffbb36"/><rect x="938.38" y="719.19" width="5.6" height="9.40" fill="#0763c6"/><rect x="938.38" y="712.62" width="5.6" height="6.11" fill="#128eff"/><rect x="938.38" y="695.67" width="5.6" height="16.51" fill="#2bb4ff"/><rect x="938.38" y="675.70" width="5.6" height="19.52" fill="#8fcdff"/></g>
<g clip-path="url(#c86)"><clipPath id="c86"><rect x="948.15" y="682.00" width="5.6" height="52.40" rx="2.8"/></clipPath><rect x="948.15" y="727.59" width="5.6" height="2.36" fill="#ffbb36"/><rect x="948.15" y="719.51" width="5.6" height="7.63" fill="#0763c6"/><rect x="948.15" y="713.02" width="5.6" height="6.04" fill="#128eff"/><rect x="948.15" y="699.81" width="5.6" height="12.76" fill="#2bb4ff"/><rect x="948.15" y="682.00" width="5.6" height="17.36" fill="#8fcdff"/></g>
<g clip-path="url(#c87)"><clipPath id="c87"><rect x="957.93" y="684.80" width="5.6" height="49.60" rx="2.8"/></clipPath><rect x="957.93" y="727.76" width="5.6" height="2.19" fill="#ffbb36"/><rect x="957.93" y="720.14" width="5.6" height="7.17" fill="#0763c6"/><rect x="957.93" y="714.03" width="5.6" height="5.66" fill="#128eff"/><rect x="957.93" y="701.58" width="5.6" height="12.00" fill="#2bb4ff"/><rect x="957.93" y="684.80" width="5.6" height="16.33" fill="#8fcdff"/></g>
<g clip-path="url(#c88)"><clipPath id="c88"><rect x="967.70" y="684.50" width="5.6" height="49.90" rx="2.8"/></clipPath><rect x="967.70" y="727.74" width="5.6" height="2.21" fill="#ffbb36"/><rect x="967.70" y="720.07" width="5.6" height="7.22" fill="#0763c6"/><rect x="967.70" y="713.92" width="5.6" height="5.70" fill="#128eff"/><rect x="967.70" y="701.39" width="5.6" height="12.08" fill="#2bb4ff"/><rect x="967.70" y="684.50" width="5.6" height="16.44" fill="#8fcdff"/></g>
<g clip-path="url(#c89)"><clipPath id="c89"><rect x="977.48" y="675.60" width="5.6" height="58.80" rx="2.8"/></clipPath><rect x="977.48" y="727.22" width="5.6" height="2.73" fill="#ffbb36"/><rect x="977.48" y="718.07" width="5.6" height="8.70" fill="#0763c6"/><rect x="977.48" y="710.73" width="5.6" height="6.89" fill="#128eff"/><rect x="977.48" y="695.77" width="5.6" height="14.51" fill="#2bb4ff"/><rect x="977.48" y="675.60" width="5.6" height="19.72" fill="#8fcdff"/></g>
<g clip-path="url(#c90)"><clipPath id="c90"><rect x="987.25" y="670.20" width="5.6" height="64.20" rx="2.8"/></clipPath><rect x="987.25" y="726.91" width="5.6" height="3.04" fill="#ffbb36"/><rect x="987.25" y="716.86" width="5.6" height="9.60" fill="#0763c6"/><rect x="987.25" y="708.79" width="5.6" height="7.62" fill="#128eff"/><rect x="987.25" y="692.35" width="5.6" height="15.98" fill="#2bb4ff"/><rect x="987.25" y="670.20" width="5.6" height="21.70" fill="#8fcdff"/></g>
<g clip-path="url(#c91)"><clipPath id="c91"><rect x="997.02" y="669.90" width="5.6" height="64.50" rx="2.8"/></clipPath><rect x="997.02" y="726.89" width="5.6" height="3.06" fill="#ffbb36"/><rect x="997.02" y="716.79" width="5.6" height="9.65" fill="#0763c6"/><rect x="997.02" y="708.68" width="5.6" height="7.66" fill="#128eff"/><rect x="997.02" y="692.16" width="5.6" height="16.07" fill="#2bb4ff"/><rect x="997.02" y="669.90" width="5.6" height="21.81" fill="#8fcdff"/></g>
<g clip-path="url(#c92)"><clipPath id="c92"><rect x="1006.80" y="668.60" width="5.6" height="65.80" rx="2.8"/></clipPath><rect x="1006.80" y="726.82" width="5.6" height="3.13" fill="#ffbb36"/><rect x="1006.80" y="716.50" width="5.6" height="9.87" fill="#0763c6"/><rect x="1006.80" y="708.21" width="5.6" height="7.83" fill="#128eff"/><rect x="1006.80" y="691.34" width="5.6" height="16.42" fill="#2bb4ff"/><rect x="1006.80" y="668.60" width="5.6" height="22.29" fill="#8fcdff"/></g>
<g clip-path="url(#c93)"><clipPath id="c93"><rect x="1016.58" y="666.90" width="5.6" height="67.50" rx="2.8"/></clipPath><rect x="1016.58" y="726.72" width="5.6" height="3.23" fill="#ffbb36"/><rect x="1016.58" y="716.11" width="5.6" height="10.15" fill="#0763c6"/><rect x="1016.58" y="707.60" width="5.6" height="8.06" fill="#128eff"/><rect x="1016.58" y="690.27" width="5.6" height="16.89" fill="#2bb4ff"/><rect x="1016.58" y="666.90" width="5.6" height="22.92" fill="#8fcdff"/></g>
<g clip-path="url(#c94)"><clipPath id="c94"><rect x="1026.35" y="667.40" width="5.6" height="67.00" rx="2.8"/></clipPath><rect x="1026.35" y="726.75" width="5.6" height="3.20" fill="#ffbb36"/><rect x="1026.35" y="716.23" width="5.6" height="10.07" fill="#0763c6"/><rect x="1026.35" y="707.78" width="5.6" height="7.99" fill="#128eff"/><rect x="1026.35" y="690.58" width="5.6" height="16.75" fill="#2bb4ff"/><rect x="1026.35" y="667.40" width="5.6" height="22.73" fill="#8fcdff"/></g>
<g clip-path="url(#c95)"><clipPath id="c95"><rect x="1036.12" y="663.00" width="5.6" height="71.40" rx="2.8"/></clipPath><rect x="1036.12" y="726.49" width="5.6" height="3.46" fill="#ffbb36"/><rect x="1036.12" y="715.23" width="5.6" height="10.81" fill="#0763c6"/><rect x="1036.12" y="706.20" width="5.6" height="8.58" fill="#128eff"/><rect x="1036.12" y="687.80" width="5.6" height="17.95" fill="#2bb4ff"/><rect x="1036.12" y="663.00" width="5.6" height="24.35" fill="#8fcdff"/></g>
<g clip-path="url(#c96)"><clipPath id="c96"><rect x="1045.90" y="662.10" width="5.6" height="72.30" rx="2.8"/></clipPath><rect x="1045.90" y="726.44" width="5.6" height="3.51" fill="#ffbb36"/><rect x="1045.90" y="715.03" width="5.6" height="10.96" fill="#0763c6"/><rect x="1045.90" y="705.88" width="5.6" height="8.70" fill="#128eff"/><rect x="1045.90" y="687.23" width="5.6" height="18.20" fill="#2bb4ff"/><rect x="1045.90" y="662.10" width="5.6" height="24.68" fill="#8fcdff"/></g>
<g clip-path="url(#c97)"><clipPath id="c97"><rect x="1055.68" y="667.10" width="5.6" height="67.30" rx="2.8"/></clipPath><rect x="1055.68" y="726.73" width="5.6" height="3.22" fill="#ffbb36"/><rect x="1055.68" y="716.16" width="5.6" height="10.12" fill="#0763c6"/><rect x="1055.68" y="707.68" width="5.6" height="8.03" fill="#128eff"/><rect x="1055.68" y="690.39" width="5.6" height="16.83" fill="#2bb4ff"/><rect x="1055.68" y="667.10" width="5.6" height="22.84" fill="#8fcdff"/></g>
<g clip-path="url(#c98)"><clipPath id="c98"><rect x="1065.45" y="666.30" width="5.6" height="68.10" rx="2.8"/></clipPath><rect x="1065.45" y="726.68" width="5.6" height="3.27" fill="#ffbb36"/><rect x="1065.45" y="715.98" width="5.6" height="10.25" fill="#0763c6"/><rect x="1065.45" y="707.39" width="5.6" height="8.14" fill="#128eff"/><rect x="1065.45" y="689.89" width="5.6" height="17.05" fill="#2bb4ff"/><rect x="1065.45" y="666.30" width="5.6" height="23.14" fill="#8fcdff"/></g>
<g clip-path="url(#c99)"><clipPath id="c99"><rect x="1075.23" y="666.90" width="5.6" height="67.50" rx="2.8"/></clipPath><rect x="1075.23" y="726.72" width="5.6" height="3.23" fill="#ffbb36"/><rect x="1075.23" y="716.11" width="5.6" height="10.15" fill="#0763c6"/><rect x="1075.23" y="707.60" width="5.6" height="8.06" fill="#128eff"/><rect x="1075.23" y="690.27" width="5.6" height="16.89" fill="#2bb4ff"/><rect x="1075.23" y="666.90" width="5.6" height="22.92" fill="#8fcdff"/></g>
<g clip-path="url(#c100)"><clipPath id="c100"><rect x="1085.00" y="659.80" width="5.6" height="74.60" rx="2.8"/></clipPath><rect x="1085.00" y="726.31" width="5.6" height="3.64" fill="#ffbb36"/><rect x="1085.00" y="714.51" width="5.6" height="11.34" fill="#0763c6"/><rect x="1085.00" y="705.05" width="5.6" height="9.01" fill="#128eff"/><rect x="1085.00" y="685.78" width="5.6" height="18.82" fill="#2bb4ff"/><rect x="1085.00" y="659.80" width="5.6" height="25.53" fill="#8fcdff"/></g>
<g clip-path="url(#c101)"><clipPath id="c101"><rect x="1094.78" y="657.20" width="5.6" height="77.20" rx="2.8"/></clipPath><rect x="1094.78" y="726.15" width="5.6" height="3.80" fill="#ffbb36"/><rect x="1094.78" y="713.93" width="5.6" height="11.77" fill="#0763c6"/><rect x="1094.78" y="704.12" width="5.6" height="9.36" fill="#128eff"/><rect x="1094.78" y="684.14" width="5.6" height="19.53" fill="#2bb4ff"/><rect x="1094.78" y="657.20" width="5.6" height="26.49" fill="#8fcdff"/></g>
<g clip-path="url(#c102)"><clipPath id="c102"><rect x="1104.55" y="660.10" width="5.6" height="74.30" rx="2.8"/></clipPath><rect x="1104.55" y="726.32" width="5.6" height="3.63" fill="#ffbb36"/><rect x="1104.55" y="714.58" width="5.6" height="11.29" fill="#0763c6"/><rect x="1104.55" y="705.16" width="5.6" height="8.97" fill="#128eff"/><rect x="1104.55" y="685.97" width="5.6" height="18.74" fill="#2bb4ff"/><rect x="1104.55" y="660.10" width="5.6" height="25.42" fill="#8fcdff"/></g>
<g clip-path="url(#c103)"><clipPath id="c103"><rect x="1114.33" y="660.10" width="5.6" height="74.30" rx="2.8"/></clipPath><rect x="1114.33" y="726.32" width="5.6" height="3.63" fill="#ffbb36"/><rect x="1114.33" y="714.58" width="5.6" height="11.29" fill="#0763c6"/><rect x="1114.33" y="705.16" width="5.6" height="8.97" fill="#128eff"/><rect x="1114.33" y="685.97" width="5.6" height="18.74" fill="#2bb4ff"/><rect x="1114.33" y="660.10" width="5.6" height="25.42" fill="#8fcdff"/></g>
<g clip-path="url(#c104)"><clipPath id="c104"><rect x="1124.10" y="657.70" width="5.6" height="76.70" rx="2.8"/></clipPath><rect x="1124.10" y="726.18" width="5.6" height="3.77" fill="#ffbb36"/><rect x="1124.10" y="714.04" width="5.6" height="11.69" fill="#0763c6"/><rect x="1124.10" y="704.30" width="5.6" height="9.29" fill="#128eff"/><rect x="1124.10" y="684.45" width="5.6" height="19.40" fill="#2bb4ff"/><rect x="1124.10" y="657.70" width="5.6" height="26.30" fill="#8fcdff"/></g>
<g clip-path="url(#c105)"><clipPath id="c105"><rect x="1133.88" y="653.60" width="5.6" height="80.80" rx="2.8"/></clipPath><rect x="1133.88" y="725.95" width="5.6" height="4.00" fill="#ffbb36"/><rect x="1133.88" y="713.12" width="5.6" height="12.38" fill="#0763c6"/><rect x="1133.88" y="702.83" width="5.6" height="9.84" fill="#128eff"/><rect x="1133.88" y="681.86" width="5.6" height="20.52" fill="#2bb4ff"/><rect x="1133.88" y="653.60" width="5.6" height="27.81" fill="#8fcdff"/></g>
<g clip-path="url(#c106)"><clipPath id="c106"><rect x="1143.65" y="652.00" width="5.6" height="82.40" rx="2.8"/></clipPath><rect x="1143.65" y="725.85" width="5.6" height="4.10" fill="#ffbb36"/><rect x="1143.65" y="712.76" width="5.6" height="12.64" fill="#0763c6"/><rect x="1143.65" y="702.25" width="5.6" height="10.06" fill="#128eff"/><rect x="1143.65" y="680.85" width="5.6" height="20.95" fill="#2bb4ff"/><rect x="1143.65" y="652.00" width="5.6" height="28.40" fill="#8fcdff"/></g>
<g clip-path="url(#c107)"><clipPath id="c107"><rect x="1153.42" y="654.90" width="5.6" height="79.50" rx="2.8"/></clipPath><rect x="1153.42" y="726.02" width="5.6" height="3.93" fill="#ffbb36"/><rect x="1153.42" y="713.41" width="5.6" height="12.16" fill="#0763c6"/><rect x="1153.42" y="703.30" width="5.6" height="9.67" fill="#128eff"/><rect x="1153.42" y="682.68" width="5.6" height="20.16" fill="#2bb4ff"/><rect x="1153.42" y="654.90" width="5.6" height="27.33" fill="#8fcdff"/></g>
<g clip-path="url(#c108)"><clipPath id="c108"><rect x="1163.20" y="659.30" width="5.6" height="75.10" rx="2.8"/></clipPath><rect x="1163.20" y="726.28" width="5.6" height="3.67" fill="#ffbb36"/><rect x="1163.20" y="714.40" width="5.6" height="11.42" fill="#0763c6"/><rect x="1163.20" y="704.88" width="5.6" height="9.08" fill="#128eff"/><rect x="1163.20" y="685.46" width="5.6" height="18.96" fill="#2bb4ff"/><rect x="1163.20" y="659.30" width="5.6" height="25.71" fill="#8fcdff"/></g>
<g clip-path="url(#c109)"><clipPath id="c109"><rect x="1172.98" y="660.60" width="5.6" height="73.80" rx="2.8"/></clipPath><rect x="1172.98" y="726.35" width="5.6" height="3.60" fill="#ffbb36"/><rect x="1172.98" y="714.69" width="5.6" height="11.21" fill="#0763c6"/><rect x="1172.98" y="705.34" width="5.6" height="8.90" fill="#128eff"/><rect x="1172.98" y="686.29" width="5.6" height="18.61" fill="#2bb4ff"/><rect x="1172.98" y="660.60" width="5.6" height="25.24" fill="#8fcdff"/></g>
<g clip-path="url(#c110)"><clipPath id="c110"><rect x="1182.75" y="664.70" width="5.6" height="69.70" rx="2.8"/></clipPath><rect x="1182.75" y="726.59" width="5.6" height="3.36" fill="#ffbb36"/><rect x="1182.75" y="715.62" width="5.6" height="10.52" fill="#0763c6"/><rect x="1182.75" y="706.81" width="5.6" height="8.35" fill="#128eff"/><rect x="1182.75" y="688.88" width="5.6" height="17.49" fill="#2bb4ff"/><rect x="1182.75" y="664.70" width="5.6" height="23.73" fill="#8fcdff"/></g>
<g clip-path="url(#c111)"><clipPath id="c111"><rect x="1192.53" y="663.70" width="5.6" height="70.70" rx="2.8"/></clipPath><rect x="1192.53" y="726.53" width="5.6" height="3.42" fill="#ffbb36"/><rect x="1192.53" y="715.39" width="5.6" height="10.69" fill="#0763c6"/><rect x="1192.53" y="706.45" width="5.6" height="8.49" fill="#128eff"/><rect x="1192.53" y="688.25" width="5.6" height="17.76" fill="#2bb4ff"/><rect x="1192.53" y="663.70" width="5.6" height="24.10" fill="#8fcdff"/></g>
<g clip-path="url(#c112)"><clipPath id="c112"><rect x="1202.30" y="663.20" width="5.6" height="71.20" rx="2.8"/></clipPath><rect x="1202.30" y="726.50" width="5.6" height="3.45" fill="#ffbb36"/><rect x="1202.30" y="715.28" width="5.6" height="10.77" fill="#0763c6"/><rect x="1202.30" y="706.28" width="5.6" height="8.55" fill="#128eff"/><rect x="1202.30" y="687.93" width="5.6" height="17.90" fill="#2bb4ff"/><rect x="1202.30" y="663.20" width="5.6" height="24.28" fill="#8fcdff"/></g>
<g clip-path="url(#c113)"><clipPath id="c113"><rect x="1212.08" y="659.00" width="5.6" height="75.40" rx="2.8"/></clipPath><rect x="1212.08" y="726.26" width="5.6" height="3.69" fill="#ffbb36"/><rect x="1212.08" y="714.33" width="5.6" height="11.47" fill="#0763c6"/><rect x="1212.08" y="704.77" width="5.6" height="9.12" fill="#128eff"/><rect x="1212.08" y="685.28" width="5.6" height="19.04" fill="#2bb4ff"/><rect x="1212.08" y="659.00" width="5.6" height="25.83" fill="#8fcdff"/></g>
<g clip-path="url(#c114)"><clipPath id="c114"><rect x="1221.85" y="657.40" width="5.6" height="77.00" rx="2.8"/></clipPath><rect x="1221.85" y="726.17" width="5.6" height="3.78" fill="#ffbb36"/><rect x="1221.85" y="713.97" width="5.6" height="11.74" fill="#0763c6"/><rect x="1221.85" y="704.19" width="5.6" height="9.33" fill="#128eff"/><rect x="1221.85" y="684.26" width="5.6" height="19.48" fill="#2bb4ff"/><rect x="1221.85" y="657.40" width="5.6" height="26.41" fill="#8fcdff"/></g>
<g clip-path="url(#c115)"><clipPath id="c115"><rect x="1231.62" y="656.40" width="5.6" height="78.00" rx="2.8"/></clipPath><rect x="1231.62" y="726.11" width="5.6" height="3.84" fill="#ffbb36"/><rect x="1231.62" y="713.75" width="5.6" height="11.91" fill="#0763c6"/><rect x="1231.62" y="703.83" width="5.6" height="9.47" fill="#128eff"/><rect x="1231.62" y="683.63" width="5.6" height="19.75" fill="#2bb4ff"/><rect x="1231.62" y="656.40" width="5.6" height="26.78" fill="#8fcdff"/></g>
<g clip-path="url(#c116)"><clipPath id="c116"><rect x="1241.40" y="656.40" width="5.6" height="78.00" rx="2.8"/></clipPath><rect x="1241.40" y="726.11" width="5.6" height="3.84" fill="#ffbb36"/><rect x="1241.40" y="713.75" width="5.6" height="11.91" fill="#0763c6"/><rect x="1241.40" y="703.83" width="5.6" height="9.47" fill="#128eff"/><rect x="1241.40" y="683.63" width="5.6" height="19.75" fill="#2bb4ff"/><rect x="1241.40" y="656.40" width="5.6" height="26.78" fill="#8fcdff"/></g>
<g clip-path="url(#c117)"><clipPath id="c117"><rect x="1251.17" y="654.00" width="5.6" height="80.40" rx="2.8"/></clipPath><rect x="1251.17" y="725.97" width="5.6" height="3.98" fill="#ffbb36"/><rect x="1251.17" y="713.21" width="5.6" height="12.31" fill="#0763c6"/><rect x="1251.17" y="702.97" width="5.6" height="9.79" fill="#128eff"/><rect x="1251.17" y="682.12" width="5.6" height="20.41" fill="#2bb4ff"/><rect x="1251.17" y="654.00" width="5.6" height="27.67" fill="#8fcdff"/></g>
<g clip-path="url(#c118)"><clipPath id="c118"><rect x="1260.95" y="650.40" width="5.6" height="84.00" rx="2.8"/></clipPath><rect x="1260.95" y="725.76" width="5.6" height="4.19" fill="#ffbb36"/><rect x="1260.95" y="712.40" width="5.6" height="12.91" fill="#0763c6"/><rect x="1260.95" y="701.68" width="5.6" height="10.27" fill="#128eff"/><rect x="1260.95" y="679.84" width="5.6" height="21.39" fill="#2bb4ff"/><rect x="1260.95" y="650.40" width="5.6" height="28.99" fill="#8fcdff"/></g>
<g clip-path="url(#c119)"><clipPath id="c119"><rect x="1270.73" y="645.10" width="5.6" height="89.30" rx="2.8"/></clipPath><rect x="1270.73" y="725.45" width="5.6" height="4.50" fill="#ffbb36"/><rect x="1270.73" y="711.21" width="5.6" height="13.80" fill="#0763c6"/><rect x="1270.73" y="699.78" width="5.6" height="10.98" fill="#128eff"/><rect x="1270.73" y="676.49" width="5.6" height="22.84" fill="#2bb4ff"/><rect x="1270.73" y="645.10" width="5.6" height="30.94" fill="#8fcdff"/></g>
<g clip-path="url(#c120)"><clipPath id="c120"><rect x="1280.50" y="642.30" width="5.6" height="92.10" rx="2.8"/></clipPath><rect x="1280.50" y="725.29" width="5.6" height="4.66" fill="#ffbb36"/><rect x="1280.50" y="710.58" width="5.6" height="14.26" fill="#0763c6"/><rect x="1280.50" y="698.77" width="5.6" height="11.36" fill="#128eff"/><rect x="1280.50" y="674.72" width="5.6" height="23.60" fill="#2bb4ff"/><rect x="1280.50" y="642.30" width="5.6" height="31.97" fill="#8fcdff"/></g>
<g clip-path="url(#c121)"><clipPath id="c121"><rect x="1290.28" y="621.70" width="5.6" height="112.70" rx="2.8"/></clipPath><rect x="1290.28" y="722.25" width="5.6" height="7.70" fill="#ffbb36"/><rect x="1290.28" y="700.51" width="5.6" height="21.29" fill="#0763c6"/><rect x="1290.28" y="682.57" width="5.6" height="17.49" fill="#128eff"/><rect x="1290.28" y="652.14" width="5.6" height="29.99" fill="#2bb4ff"/><rect x="1290.28" y="621.70" width="5.6" height="29.99" fill="#8fcdff"/></g>
<g clip-path="url(#c122)"><clipPath id="c122"><rect x="1300.05" y="613.50" width="5.6" height="120.90" rx="2.8"/></clipPath><rect x="1300.05" y="721.63" width="5.6" height="8.32" fill="#ffbb36"/><rect x="1300.05" y="698.25" width="5.6" height="22.93" fill="#0763c6"/><rect x="1300.05" y="678.96" width="5.6" height="18.84" fill="#128eff"/><rect x="1300.05" y="646.23" width="5.6" height="32.28" fill="#2bb4ff"/><rect x="1300.05" y="613.50" width="5.6" height="32.28" fill="#8fcdff"/></g>
<g clip-path="url(#c123)"><clipPath id="c123"><rect x="1309.83" y="617.10" width="5.6" height="117.30" rx="2.8"/></clipPath><rect x="1309.83" y="721.90" width="5.6" height="8.05" fill="#ffbb36"/><rect x="1309.83" y="699.24" width="5.6" height="22.21" fill="#0763c6"/><rect x="1309.83" y="680.55" width="5.6" height="18.24" fill="#128eff"/><rect x="1309.83" y="648.82" width="5.6" height="31.27" fill="#2bb4ff"/><rect x="1309.83" y="617.10" width="5.6" height="31.27" fill="#8fcdff"/></g>
<g clip-path="url(#c124)"><clipPath id="c124"><rect x="1319.60" y="608.50" width="5.6" height="125.90" rx="2.8"/></clipPath><rect x="1319.60" y="721.26" width="5.6" height="8.69" fill="#ffbb36"/><rect x="1319.60" y="696.88" width="5.6" height="23.93" fill="#0763c6"/><rect x="1319.60" y="676.76" width="5.6" height="19.66" fill="#128eff"/><rect x="1319.60" y="642.63" width="5.6" height="33.68" fill="#2bb4ff"/><rect x="1319.60" y="608.50" width="5.6" height="33.68" fill="#8fcdff"/></g>
<g clip-path="url(#c125)"><clipPath id="c125"><rect x="1329.38" y="604.90" width="5.6" height="129.50" rx="2.8"/></clipPath><rect x="1329.38" y="720.99" width="5.6" height="8.96" fill="#ffbb36"/><rect x="1329.38" y="695.89" width="5.6" height="24.65" fill="#0763c6"/><rect x="1329.38" y="675.18" width="5.6" height="20.26" fill="#128eff"/><rect x="1329.38" y="640.04" width="5.6" height="34.69" fill="#2bb4ff"/><rect x="1329.38" y="604.90" width="5.6" height="34.69" fill="#8fcdff"/></g>
<g clip-path="url(#c126)"><clipPath id="c126"><rect x="1339.15" y="602.50" width="5.6" height="131.90" rx="2.8"/></clipPath><rect x="1339.15" y="720.81" width="5.6" height="9.14" fill="#ffbb36"/><rect x="1339.15" y="695.23" width="5.6" height="25.13" fill="#0763c6"/><rect x="1339.15" y="674.12" width="5.6" height="20.65" fill="#128eff"/><rect x="1339.15" y="638.31" width="5.6" height="35.36" fill="#2bb4ff"/><rect x="1339.15" y="602.50" width="5.6" height="35.36" fill="#8fcdff"/></g>
<g clip-path="url(#c127)"><clipPath id="c127"><rect x="1348.92" y="593.10" width="5.6" height="141.30" rx="2.8"/></clipPath><rect x="1348.92" y="720.10" width="5.6" height="9.85" fill="#ffbb36"/><rect x="1348.92" y="692.64" width="5.6" height="27.01" fill="#0763c6"/><rect x="1348.92" y="669.99" width="5.6" height="22.20" fill="#128eff"/><rect x="1348.92" y="631.54" width="5.6" height="37.99" fill="#2bb4ff"/><rect x="1348.92" y="593.10" width="5.6" height="37.99" fill="#8fcdff"/></g>
<g clip-path="url(#c128)"><clipPath id="c128"><rect x="1358.70" y="589.50" width="5.6" height="144.90" rx="2.8"/></clipPath><rect x="1358.70" y="719.83" width="5.6" height="10.12" fill="#ffbb36"/><rect x="1358.70" y="691.65" width="5.6" height="27.73" fill="#0763c6"/><rect x="1358.70" y="668.40" width="5.6" height="22.80" fill="#128eff"/><rect x="1358.70" y="628.95" width="5.6" height="39.00" fill="#2bb4ff"/><rect x="1358.70" y="589.50" width="5.6" height="39.00" fill="#8fcdff"/></g>
<g clip-path="url(#c129)"><clipPath id="c129"><rect x="1368.48" y="601.40" width="5.6" height="133.00" rx="2.8"/></clipPath><rect x="1368.48" y="720.73" width="5.6" height="9.22" fill="#ffbb36"/><rect x="1368.48" y="694.93" width="5.6" height="25.35" fill="#0763c6"/><rect x="1368.48" y="673.64" width="5.6" height="20.84" fill="#128eff"/><rect x="1368.48" y="637.52" width="5.6" height="35.67" fill="#2bb4ff"/><rect x="1368.48" y="601.40" width="5.6" height="35.67" fill="#8fcdff"/></g>
<g clip-path="url(#c130)"><clipPath id="c130"><rect x="1378.25" y="606.60" width="5.6" height="127.80" rx="2.8"/></clipPath><rect x="1378.25" y="721.12" width="5.6" height="8.83" fill="#ffbb36"/><rect x="1378.25" y="696.36" width="5.6" height="24.31" fill="#0763c6"/><rect x="1378.25" y="675.93" width="5.6" height="19.98" fill="#128eff"/><rect x="1378.25" y="641.26" width="5.6" height="34.21" fill="#2bb4ff"/><rect x="1378.25" y="606.60" width="5.6" height="34.21" fill="#8fcdff"/></g>
<g clip-path="url(#c131)"><clipPath id="c131"><rect x="1388.03" y="599.20" width="5.6" height="135.20" rx="2.8"/></clipPath><rect x="1388.03" y="720.56" width="5.6" height="9.39" fill="#ffbb36"/><rect x="1388.03" y="694.32" width="5.6" height="25.79" fill="#0763c6"/><rect x="1388.03" y="672.67" width="5.6" height="21.20" fill="#128eff"/><rect x="1388.03" y="635.94" width="5.6" height="36.29" fill="#2bb4ff"/><rect x="1388.03" y="599.20" width="5.6" height="36.29" fill="#8fcdff"/></g>
<g clip-path="url(#c132)"><clipPath id="c132"><rect x="1397.80" y="614.50" width="5.6" height="119.90" rx="2.8"/></clipPath><rect x="1397.80" y="721.71" width="5.6" height="8.24" fill="#ffbb36"/><rect x="1397.80" y="698.53" width="5.6" height="22.73" fill="#0763c6"/><rect x="1397.80" y="679.40" width="5.6" height="18.67" fill="#128eff"/><rect x="1397.80" y="646.95" width="5.6" height="32.00" fill="#2bb4ff"/><rect x="1397.80" y="614.50" width="5.6" height="32.00" fill="#8fcdff"/></g>
<g clip-path="url(#c133)"><clipPath id="c133"><rect x="1407.58" y="610.30" width="5.6" height="124.10" rx="2.8"/></clipPath><rect x="1407.58" y="721.39" width="5.6" height="8.56" fill="#ffbb36"/><rect x="1407.58" y="697.37" width="5.6" height="23.57" fill="#0763c6"/><rect x="1407.58" y="677.56" width="5.6" height="19.37" fill="#128eff"/><rect x="1407.58" y="643.93" width="5.6" height="33.18" fill="#2bb4ff"/><rect x="1407.58" y="610.30" width="5.6" height="33.18" fill="#8fcdff"/></g>
<g clip-path="url(#c134)"><clipPath id="c134"><rect x="1417.35" y="624.70" width="5.6" height="109.70" rx="2.8"/></clipPath><rect x="1417.35" y="722.47" width="5.6" height="7.48" fill="#ffbb36"/><rect x="1417.35" y="701.33" width="5.6" height="20.69" fill="#0763c6"/><rect x="1417.35" y="683.89" width="5.6" height="16.99" fill="#128eff"/><rect x="1417.35" y="654.30" width="5.6" height="29.15" fill="#2bb4ff"/><rect x="1417.35" y="624.70" width="5.6" height="29.15" fill="#8fcdff"/></g>
<g clip-path="url(#c135)"><clipPath id="c135"><rect x="1427.12" y="614.20" width="5.6" height="120.20" rx="2.8"/></clipPath><rect x="1427.12" y="722.46" width="5.6" height="7.49" fill="#ffbb36"/><rect x="1427.12" y="700.92" width="5.6" height="21.10" fill="#0763c6"/><rect x="1427.12" y="685.04" width="5.6" height="15.43" fill="#128eff"/><rect x="1427.12" y="653.29" width="5.6" height="31.30" fill="#2bb4ff"/><rect x="1427.12" y="617.00" width="5.6" height="35.84" fill="#8fcdff"/><rect x="1427.12" y="614.20" width="5.6" height="3.00" fill="#5cb83a"/></g>
<g clip-path="url(#c136)"><clipPath id="c136"><rect x="1436.90" y="616.00" width="5.6" height="118.40" rx="2.8"/></clipPath><rect x="1436.90" y="722.59" width="5.6" height="7.36" fill="#ffbb36"/><rect x="1436.90" y="701.38" width="5.6" height="20.75" fill="#0763c6"/><rect x="1436.90" y="685.76" width="5.6" height="15.17" fill="#128eff"/><rect x="1436.90" y="654.51" width="5.6" height="30.80" fill="#2bb4ff"/><rect x="1436.90" y="618.80" width="5.6" height="35.26" fill="#8fcdff"/><rect x="1436.90" y="616.00" width="5.6" height="3.00" fill="#5cb83a"/></g>
<g clip-path="url(#c137)"><clipPath id="c137"><rect x="1446.67" y="605.90" width="5.6" height="128.50" rx="2.8"/></clipPath><rect x="1446.67" y="721.88" width="5.6" height="8.07" fill="#ffbb36"/><rect x="1446.67" y="698.76" width="5.6" height="22.67" fill="#0763c6"/><rect x="1446.67" y="681.72" width="5.6" height="16.59" fill="#128eff"/><rect x="1446.67" y="647.64" width="5.6" height="33.63" fill="#2bb4ff"/><rect x="1446.67" y="608.70" width="5.6" height="38.49" fill="#8fcdff"/><rect x="1446.67" y="605.90" width="5.6" height="3.00" fill="#5cb83a"/></g>
<g clip-path="url(#c138)"><clipPath id="c138"><rect x="1456.45" y="618.00" width="5.6" height="116.40" rx="2.8"/></clipPath><rect x="1456.45" y="722.73" width="5.6" height="7.22" fill="#ffbb36"/><rect x="1456.45" y="701.90" width="5.6" height="20.37" fill="#0763c6"/><rect x="1456.45" y="686.56" width="5.6" height="14.89" fill="#128eff"/><rect x="1456.45" y="655.87" width="5.6" height="30.24" fill="#2bb4ff"/><rect x="1456.45" y="620.80" width="5.6" height="34.62" fill="#8fcdff"/><rect x="1456.45" y="618.00" width="5.6" height="3.00" fill="#5cb83a"/></g>
<g clip-path="url(#c139)"><clipPath id="c139"><rect x="1466.23" y="623.40" width="5.6" height="111.00" rx="2.8"/></clipPath><rect x="1466.23" y="723.11" width="5.6" height="6.84" fill="#ffbb36"/><rect x="1466.23" y="703.31" width="5.6" height="19.35" fill="#0763c6"/><rect x="1466.23" y="688.72" width="5.6" height="14.14" fill="#128eff"/><rect x="1466.23" y="659.54" width="5.6" height="28.73" fill="#2bb4ff"/><rect x="1466.23" y="626.20" width="5.6" height="32.89" fill="#8fcdff"/><rect x="1466.23" y="623.40" width="5.6" height="3.00" fill="#5cb83a"/></g>
<g clip-path="url(#c140)"><clipPath id="c140"><rect x="1476.00" y="613.10" width="5.6" height="121.30" rx="2.8"/></clipPath><rect x="1476.00" y="722.38" width="5.6" height="7.56" fill="#ffbb36"/><rect x="1476.00" y="700.63" width="5.6" height="21.30" fill="#0763c6"/><rect x="1476.00" y="684.60" width="5.6" height="15.58" fill="#128eff"/><rect x="1476.00" y="652.54" width="5.6" height="31.61" fill="#2bb4ff"/><rect x="1476.00" y="615.90" width="5.6" height="36.19" fill="#8fcdff"/><rect x="1476.00" y="613.10" width="5.6" height="3.00" fill="#5cb83a"/></g>
<g clip-path="url(#c141)"><clipPath id="c141"><rect x="1485.78" y="619.70" width="5.6" height="114.70" rx="2.8"/></clipPath><rect x="1485.78" y="722.85" width="5.6" height="7.10" fill="#ffbb36"/><rect x="1485.78" y="702.35" width="5.6" height="20.05" fill="#0763c6"/><rect x="1485.78" y="687.24" width="5.6" height="14.66" fill="#128eff"/><rect x="1485.78" y="657.03" width="5.6" height="29.76" fill="#2bb4ff"/><rect x="1485.78" y="622.50" width="5.6" height="34.08" fill="#8fcdff"/><rect x="1485.78" y="619.70" width="5.6" height="3.00" fill="#5cb83a"/></g>
<g clip-path="url(#c142)"><clipPath id="c142"><rect x="1495.55" y="625.90" width="5.6" height="108.50" rx="2.8"/></clipPath><rect x="1495.55" y="723.28" width="5.6" height="6.67" fill="#ffbb36"/><rect x="1495.55" y="703.96" width="5.6" height="18.87" fill="#0763c6"/><rect x="1495.55" y="689.72" width="5.6" height="13.79" fill="#128eff"/><rect x="1495.55" y="661.24" width="5.6" height="28.03" fill="#2bb4ff"/><rect x="1495.55" y="628.70" width="5.6" height="32.09" fill="#8fcdff"/><rect x="1495.55" y="625.90" width="5.6" height="3.00" fill="#5cb83a"/></g>
<g clip-path="url(#c143)"><clipPath id="c143"><rect x="1505.33" y="619.70" width="5.6" height="114.70" rx="2.8"/></clipPath><rect x="1505.33" y="725.54" width="5.6" height="4.41" fill="#ffbb36"/><rect x="1505.33" y="710.44" width="5.6" height="14.66" fill="#0763c6"/><rect x="1505.33" y="695.33" width="5.6" height="14.66" fill="#128eff"/><rect x="1505.33" y="662.42" width="5.6" height="32.46" fill="#2bb4ff"/><rect x="1505.33" y="622.50" width="5.6" height="39.47" fill="#8fcdff"/><rect x="1505.33" y="619.70" width="5.6" height="3.00" fill="#5cb83a"/></g>
<g clip-path="url(#c144)"><clipPath id="c144"><rect x="1515.10" y="608.20" width="5.6" height="126.20" rx="2.8"/></clipPath><rect x="1515.10" y="725.03" width="5.6" height="4.92" fill="#ffbb36"/><rect x="1515.10" y="708.31" width="5.6" height="16.27" fill="#0763c6"/><rect x="1515.10" y="691.59" width="5.6" height="16.27" fill="#128eff"/><rect x="1515.10" y="655.18" width="5.6" height="35.97" fill="#2bb4ff"/><rect x="1515.10" y="611.00" width="5.6" height="43.73" fill="#8fcdff"/><rect x="1515.10" y="608.20" width="5.6" height="3.00" fill="#5cb83a"/></g>
<g clip-path="url(#c145)"><clipPath id="c145"><rect x="1524.88" y="606.70" width="5.6" height="127.70" rx="2.8"/></clipPath><rect x="1524.88" y="724.96" width="5.6" height="4.99" fill="#ffbb36"/><rect x="1524.88" y="708.03" width="5.6" height="16.48" fill="#0763c6"/><rect x="1524.88" y="691.11" width="5.6" height="16.48" fill="#128eff"/><rect x="1524.88" y="654.23" width="5.6" height="36.42" fill="#2bb4ff"/><rect x="1524.88" y="609.50" width="5.6" height="44.28" fill="#8fcdff"/><rect x="1524.88" y="606.70" width="5.6" height="3.00" fill="#5cb83a"/></g>
<g clip-path="url(#c146)"><clipPath id="c146"><rect x="1534.65" y="599.60" width="5.6" height="134.80" rx="2.8"/></clipPath><rect x="1534.65" y="724.64" width="5.6" height="5.31" fill="#ffbb36"/><rect x="1534.65" y="706.72" width="5.6" height="17.47" fill="#0763c6"/><rect x="1534.65" y="688.80" width="5.6" height="17.47" fill="#128eff"/><rect x="1534.65" y="649.76" width="5.6" height="38.59" fill="#2bb4ff"/><rect x="1534.65" y="602.40" width="5.6" height="46.91" fill="#8fcdff"/><rect x="1534.65" y="599.60" width="5.6" height="3.00" fill="#5cb83a"/></g>
<g clip-path="url(#c147)"><clipPath id="c147"><rect x="1544.42" y="597.80" width="5.6" height="136.60" rx="2.8"/></clipPath><rect x="1544.42" y="724.56" width="5.6" height="5.39" fill="#ffbb36"/><rect x="1544.42" y="706.39" width="5.6" height="17.72" fill="#0763c6"/><rect x="1544.42" y="688.21" width="5.6" height="17.72" fill="#128eff"/><rect x="1544.42" y="648.63" width="5.6" height="39.14" fill="#2bb4ff"/><rect x="1544.42" y="600.60" width="5.6" height="47.58" fill="#8fcdff"/><rect x="1544.42" y="597.80" width="5.6" height="3.00" fill="#5cb83a"/></g>
<g clip-path="url(#c148)" opacity="0.8"><clipPath id="c148"><rect x="1554.20" y="599.10" width="5.6" height="135.30" rx="2.8"/></clipPath><rect x="1554.20" y="724.62" width="5.6" height="5.33" fill="#ffbb36"/><rect x="1554.20" y="706.63" width="5.6" height="17.54" fill="#0763c6"/><rect x="1554.20" y="688.64" width="5.6" height="17.54" fill="#128eff"/><rect x="1554.20" y="649.44" width="5.6" height="38.74" fill="#2bb4ff"/><rect x="1554.20" y="601.90" width="5.6" height="47.09" fill="#8fcdff"/><rect x="1554.20" y="599.10" width="5.6" height="3.00" fill="#5cb83a"/></g>
<path d="M980.4 518V730" stroke="#b8bac1" stroke-width="1.3" stroke-dasharray="5 3.5" opacity="0.85"/>
<path d="M1430.5 518V730" stroke="#b8bac1" stroke-width="1.3" stroke-dasharray="5 3.5" opacity="0.85"/>
<rect x="1556.3" y="518.2" width="1.6" height="212.4" fill="#b3b5bc" opacity="0.8"/>
<use href="#gg" x="217.82" y="730.6"/>
<use href="#gg" x="227.60" y="730.6"/>
<use href="#gg" x="247.15" y="730.6"/>
<use href="#gg" x="266.70" y="730.6"/>
<use href="#gg" x="286.25" y="730.6"/>
<use href="#gg" x="296.02" y="730.6"/>
<use href="#gg" x="315.57" y="730.6"/>
<use href="#gg" x="354.68" y="730.6"/>
<use href="#gg" x="364.45" y="730.6"/>
<use href="#gg" x="384.00" y="730.6"/>
<use href="#gg" x="393.78" y="730.6"/>
<use href="#gg" x="403.55" y="730.6"/>
<use href="#gg" x="413.33" y="730.6"/>
<use href="#gg" x="432.88" y="730.6"/>
<use href="#gg" x="442.65" y="730.6"/>
<use href="#gg" x="471.98" y="730.6"/>
<use href="#gg" x="491.53" y="730.6"/>
<use href="#gg" x="501.30" y="730.6"/>
<use href="#gg" x="511.08" y="730.6"/>
<use href="#gg" x="550.17" y="730.6"/>
<use href="#gg" x="579.50" y="730.6"/>
<use href="#gg" x="618.60" y="730.6"/>
<use href="#gg" x="657.70" y="730.6"/>
<use href="#gg" x="667.48" y="730.6"/>
<use href="#gg" x="677.25" y="730.6"/>
<use href="#gg" x="687.02" y="730.6"/>
<use href="#gg" x="696.80" y="730.6"/>
<use href="#gg" x="706.57" y="730.6"/>
<use href="#gg" x="716.35" y="730.6"/>
<use href="#gg" x="735.90" y="730.6"/>
<use href="#gg" x="745.67" y="730.6"/>
<use href="#gg" x="765.23" y="730.6"/>
<use href="#gg" x="794.55" y="730.6"/>
<use href="#gg" x="804.32" y="730.6"/>
<use href="#gg" x="833.65" y="730.6"/>
<use href="#gg" x="843.42" y="730.6"/>
<use href="#gg" x="882.52" y="730.6"/>
<use href="#gg" x="892.30" y="730.6"/>
<use href="#gg" x="950.95" y="730.6"/>
<use href="#gg" x="960.73" y="730.6"/>
<use href="#gg" x="970.50" y="730.6"/>
<use href="#gg" x="980.27" y="730.6"/>
<use href="#gg" x="990.05" y="730.6"/>
<use href="#gg" x="999.82" y="730.6"/>
<use href="#gg" x="1009.60" y="730.6"/>
<use href="#gg" x="1019.38" y="730.6"/>
<use href="#gg" x="1029.15" y="730.6"/>
<use href="#gg" x="1048.70" y="730.6"/>
<use href="#gg" x="1068.25" y="730.6"/>
<use href="#gg" x="1087.80" y="730.6"/>
<use href="#gg" x="1146.45" y="730.6"/>
<use href="#gg" x="1156.22" y="730.6"/>
<use href="#gg" x="1175.78" y="730.6"/>
<use href="#gg" x="1195.33" y="730.6"/>
<use href="#gg" x="1214.88" y="730.6"/>
<use href="#gg" x="1224.65" y="730.6"/>
<use href="#gg" x="1234.42" y="730.6"/>
<use href="#gg" x="1263.75" y="730.6"/>
<use href="#gg" x="1322.40" y="730.6"/>
<use href="#gg" x="1361.50" y="730.6"/>
<use href="#gg" x="1381.05" y="730.6"/>
<use href="#gg" x="1390.83" y="730.6"/>
<use href="#gg" x="1410.38" y="730.6"/>
<use href="#gg" x="1420.15" y="730.6"/>
<use href="#gg" x="1469.03" y="730.6"/>
<use href="#gg" x="1478.80" y="730.6"/>
<use href="#gg" x="1488.58" y="730.6"/>
<use href="#gg" x="1498.35" y="730.6"/>
<use href="#gg" x="1537.45" y="730.6"/>
</svg>
<div class="t" style="left:964.2px;top:613.2px;font-size:16.3px;color:#6c6e79;transform:translate(-50%,-50%) rotate(-90deg);letter-spacing:0.405px;">Database growth</div>
<div class="t" style="left:1414.2px;top:613.2px;font-size:16.3px;color:#6c6e79;transform:translate(-50%,-50%) rotate(-90deg);letter-spacing:-0.055px;">SERP features</div>
<div style="position:absolute;left:6.40px;top:815.30px;width:783.50px;height:600.00px;box-sizing:border-box;border:1.3px solid #e4e5ea;border-radius:10px;background:#fff;"></div>
<div class="t" style="left:34.38px;top:834.00px;font-size:21.5px;color:#171a22;font-weight:700;letter-spacing:0.087px;">Top Keywords</div>
<div style="position:absolute;left:8.50px;top:869.00px;width:780.00px;height:1.30px;background:#e6e7ed;"></div>
<div style="position:absolute;left:34.00px;top:892.00px;width:376.00px;height:36.60px;box-sizing:border-box;border:1.5px solid #c4c7cf;border-radius:7px;background:#fff;"></div>
<div style="position:absolute;left:34.00px;top:892.00px;width:131.40px;height:36.60px;box-sizing:border-box;border:1.5px solid #006dca;border-radius:7px 0 0 7px;background:#e3f1fe;"></div>
<div style="position:absolute;left:256.50px;top:893.00px;width:1.50px;height:34.60px;background:#c4c7cf;"></div>
<div class="t" style="left:47.20px;top:900.72px;font-size:19px;color:#171a22;letter-spacing:0.234px;">All Positions</div>
<div class="t" style="left:176.84px;top:900.72px;font-size:19px;color:#171a22;letter-spacing:0.422px;">Organic</div>
<div class="t" style="left:268.94px;top:900.72px;font-size:19px;color:#171a22;letter-spacing:-0.196px;">SERP Features</div>
<div class="t" style="left:33.20px;top:958.29px;font-size:17.5px;color:#171a22;letter-spacing:-0.156px;">Keyword</div>
<div class="t" style="left:431.10px;top:958.29px;font-size:17.5px;color:#171a22;letter-spacing:-0.061px;">Position</div>
<div class="t" style="left:533.16px;top:958.29px;font-size:17.5px;color:#171a22;letter-spacing:-1.225px;">SF</div>
<div class="t" style="left:589.16px;top:958.29px;font-size:17.5px;color:#171a22;letter-spacing:-0.498px;">Volume</div>
<div class="t" style="left:669.15px;top:958.29px;font-size:17.5px;color:#171a22;letter-spacing:-0.264px;">Traffic %</div>
<svg style="position:absolute;left:743px;top:960px" width="16" height="14" viewBox="0 0 16 14" fill="#6c6e79"><rect x="0" y="0.5" width="16" height="2.2" rx="1"/><rect x="0" y="5.5" width="11" height="2.2" rx="1"/><rect x="0" y="10.5" width="5" height="2.2" rx="1"/></svg>
<div style="position:absolute;left:8.50px;top:987.30px;width:780.00px;height:2.00px;background:#c9cbd3;"></div>
<div class="t" style="left:32.72px;top:1004.39px;font-size:19.5px;color:#006dca;letter-spacing:0.689px;">cane corso</div>
<svg style="position:absolute;left:141.5px;top:1006.3px" width="17" height="14" viewBox="0 0 17 14" fill="none" stroke="#a4a6ad" stroke-width="2.4" stroke-linecap="round" stroke-linejoin="round">
<path d="M2 2L7 7L2 12"/><path d="M9.5 2L14.5 7L9.5 12"/></svg>
<svg style="position:absolute;left:450.6px;top:1006.1999999999999px" width="21" height="14" viewBox="0 0 21 14" fill="none" stroke="#006dca" stroke-width="2.5" stroke-linecap="butt">
<path d="M8.4 1.3H6.5a5.7 5.7 0 0 0 0 11.4H8.4"/><path d="M12.6 1.3h1.9a5.7 5.7 0 0 1 0 11.4h-1.9"/><path d="M7.2 7h6.6" stroke-linecap="round"/></svg>
<div class="t" style="left:481.04px;top:1004.39px;font-size:19.5px;color:#171a22;">1</div>
<div class="t" style="left:529.85px;top:1004.39px;font-size:19.5px;color:#6c6e79;">10</div>
<svg style="position:absolute;left:530px;top:1026.2px" width="24" height="3" viewBox="0 0 24 3"><path d="M0.5 1.5H5.5M9.5 1.5H14.5M18.5 1.5H23.5" stroke="#6c6e79" stroke-width="1.6"/></svg>
<div class="t" style="left:599.30px;top:1004.39px;font-size:19.5px;color:#171a22;letter-spacing:0.956px;">3.4M</div>
<div class="t" style="left:710.00px;top:1004.39px;font-size:19.5px;color:#171a22;letter-spacing:0.831px;">41.19</div>
<div style="position:absolute;left:8.50px;top:1038.00px;width:780.00px;height:1.30px;background:#e6e7ed;"></div>
<div class="t" style="left:32.72px;top:1054.04px;font-size:19.5px;color:#006dca;letter-spacing:0.589px;">cat tree</div>
<svg style="position:absolute;left:109px;top:1055.95px" width="17" height="14" viewBox="0 0 17 14" fill="none" stroke="#a4a6ad" stroke-width="2.4" stroke-linecap="round" stroke-linejoin="round">
<path d="M2 2L7 7L2 12"/><path d="M9.5 2L14.5 7L9.5 12"/></svg>
<svg style="position:absolute;left:450.6px;top:1055.85px" width="21" height="14" viewBox="0 0 21 14" fill="none" stroke="#006dca" stroke-width="2.5" stroke-linecap="butt">
<path d="M8.4 1.3H6.5a5.7 5.7 0 0 0 0 11.4H8.4"/><path d="M12.6 1.3h1.9a5.7 5.7 0 0 1 0 11.4h-1.9"/><path d="M7.2 7h6.6" stroke-linecap="round"/></svg>
<div class="t" style="left:481.04px;top:1054.04px;font-size:19.5px;color:#171a22;">1</div>
<div class="t" style="left:541.37px;top:1054.04px;font-size:19.5px;color:#6c6e79;">5</div>
<svg style="position:absolute;left:542.5px;top:1075.8px" width="11" height="3" viewBox="0 0 11 3"><path d="M0.5 1.5H4.5M6.5 1.5H10.5" stroke="#6c6e79" stroke-width="1.6"/></svg>
<div class="t" style="left:595.49px;top:1054.04px;font-size:19.5px;color:#171a22;letter-spacing:1.024px;">165K</div>
<div class="t" style="left:721.73px;top:1054.04px;font-size:19.5px;color:#171a22;letter-spacing:0.839px;">2.02</div>
<div style="position:absolute;left:8.50px;top:1087.80px;width:780.00px;height:1.30px;background:#e6e7ed;"></div>
<div class="t" style="left:32.23px;top:1103.69px;font-size:19.5px;color:#006dca;letter-spacing:0.719px;">king corso</div>
<svg style="position:absolute;left:142.5px;top:1105.6000000000001px" width="17" height="14" viewBox="0 0 17 14" fill="none" stroke="#a4a6ad" stroke-width="2.4" stroke-linecap="round" stroke-linejoin="round">
<path d="M2 2L7 7L2 12"/><path d="M9.5 2L14.5 7L9.5 12"/></svg>
<svg style="position:absolute;left:450.6px;top:1105.5px" width="21" height="14" viewBox="0 0 21 14" fill="none" stroke="#006dca" stroke-width="2.5" stroke-linecap="butt">
<path d="M8.4 1.3H6.5a5.7 5.7 0 0 0 0 11.4H8.4"/><path d="M12.6 1.3h1.9a5.7 5.7 0 0 1 0 11.4h-1.9"/><path d="M7.2 7h6.6" stroke-linecap="round"/></svg>
<div class="t" style="left:481.04px;top:1103.69px;font-size:19.5px;color:#171a22;">1</div>
<div class="t" style="left:541.18px;top:1103.69px;font-size:19.5px;color:#6c6e79;">6</div>
<svg style="position:absolute;left:542.5px;top:1125.5px" width="11" height="3" viewBox="0 0 11 3"><path d="M0.5 1.5H4.5M6.5 1.5H10.5" stroke="#6c6e79" stroke-width="1.6"/></svg>
<div class="t" style="left:595.49px;top:1103.69px;font-size:19.5px;color:#171a22;letter-spacing:1.024px;">165K</div>
<div class="t" style="left:721.73px;top:1103.69px;font-size:19.5px;color:#171a22;letter-spacing:0.839px;">2.02</div>
<div style="position:absolute;left:8.50px;top:1137.60px;width:780.00px;height:1.30px;background:#e6e7ed;"></div>
<div class="t" style="left:32.72px;top:1153.34px;font-size:19.5px;color:#006dca;letter-spacing:0.574px;">dog crate</div>
<svg style="position:absolute;left:128px;top:1155.25px" width="17" height="14" viewBox="0 0 17 14" fill="none" stroke="#a4a6ad" stroke-width="2.4" stroke-linecap="round" stroke-linejoin="round">
<path d="M2 2L7 7L2 12"/><path d="M9.5 2L14.5 7L9.5 12"/></svg>
<svg style="position:absolute;left:471px;top:1150.2px" width="22" height="21" viewBox="0 0 22 21" fill="none" stroke="#006dca" stroke-width="2.5" stroke-linejoin="round" stroke-linecap="round"><path d="M10.3 1.4L1.6 6.6L10.3 11.7L19.1 6.6Z"/><path d="M5.3 9.2V12.4C5.3 18.3 15.3 18.3 15.3 12.4V9.2"/><path d="M19.1 6.8V16.6"/></svg>
<div class="t" style="left:529.85px;top:1153.34px;font-size:19.5px;color:#6c6e79;">10</div>
<svg style="position:absolute;left:530px;top:1175.1px" width="24" height="3" viewBox="0 0 24 3"><path d="M0.5 1.5H5.5M9.5 1.5H14.5M18.5 1.5H23.5" stroke="#6c6e79" stroke-width="1.6"/></svg>
<div class="t" style="left:599.30px;top:1153.34px;font-size:19.5px;color:#171a22;letter-spacing:0.956px;">3.4M</div>
<div class="t" style="left:721.66px;top:1153.34px;font-size:19.5px;color:#171a22;letter-spacing:0.830px;">1.59</div>
<div style="position:absolute;left:8.50px;top:1187.40px;width:780.00px;height:1.30px;background:#e6e7ed;"></div>
<div class="t" style="left:32.72px;top:1202.99px;font-size:19.5px;color:#006dca;letter-spacing:0.505px;">cat toys</div>
<svg style="position:absolute;left:117.5px;top:1204.9px" width="17" height="14" viewBox="0 0 17 14" fill="none" stroke="#a4a6ad" stroke-width="2.4" stroke-linecap="round" stroke-linejoin="round">
<path d="M2 2L7 7L2 12"/><path d="M9.5 2L14.5 7L9.5 12"/></svg>
<div class="t" style="left:481.04px;top:1202.99px;font-size:19.5px;color:#171a22;">1</div>
<div class="t" style="left:541.18px;top:1202.99px;font-size:19.5px;color:#6c6e79;">6</div>
<svg style="position:absolute;left:542.5px;top:1224.8px" width="11" height="3" viewBox="0 0 11 3"><path d="M0.5 1.5H4.5M6.5 1.5H10.5" stroke="#6c6e79" stroke-width="1.6"/></svg>
<div class="t" style="left:607.14px;top:1202.99px;font-size:19.5px;color:#171a22;letter-spacing:1.170px;">74K</div>
<div class="t" style="left:721.61px;top:1202.99px;font-size:19.5px;color:#171a22;letter-spacing:0.846px;">0.91</div>
<div style="position:absolute;left:8.50px;top:1237.20px;width:780.00px;height:1.30px;background:#e6e7ed;"></div>
<div style="position:absolute;left:34.25px;top:1265.00px;width:231.25px;height:36.25px;border-radius:6px;background:#0a8ef8;"></div>
<div class="t" style="left:46.90px;top:1274.79px;font-size:19.5px;color:#fff;font-weight:700;letter-spacing:-0.424px;">View all 1.5M keywords</div>
<div style="position:absolute;left:809.00px;top:815.30px;width:783.50px;height:600.00px;box-sizing:border-box;border:1.3px solid #e4e5ea;border-radius:10px;background:#fff;"></div>
<div class="t" style="left:836.10px;top:834.60px;font-size:21.5px;color:#171a22;font-weight:700;letter-spacing:0.199px;">Keywords by Intent</div>
<div style="position:absolute;left:810.50px;top:869.00px;width:780.50px;height:1.30px;background:#e6e7ed;"></div>
<div style="position:absolute;left:837.00px;top:896.70px;width:379.10px;height:21.30px;background:#2bb1ff;border-radius:3px 0 0 3px;"></div>
<div style="position:absolute;left:1217.20px;top:896.70px;width:36.10px;height:21.30px;background:#a96ef6;"></div>
<div style="position:absolute;left:1254.80px;top:896.70px;width:153.10px;height:21.30px;background:#ffbe3d;"></div>
<div style="position:absolute;left:1409.00px;top:896.70px;width:152.60px;height:21.30px;background:#59dba6;border-radius:0 3px 3px 0;"></div>
<div class="t" style="left:835.92px;top:953.19px;font-size:17.5px;color:#171a22;letter-spacing:0.183px;">Intent</div>
<div class="t" style="left:1372.60px;top:953.19px;font-size:17.5px;color:#171a22;letter-spacing:-0.259px;">Keywords</div>
<div class="t" style="left:1517.25px;top:953.19px;font-size:17.5px;color:#171a22;letter-spacing:0.033px;">Traffic</div>
<div style="position:absolute;left:810.50px;top:982.60px;width:780.50px;height:2.00px;background:#c9cbd3;"></div>
<div style="position:absolute;left:836.70px;top:998.80px;width:16.50px;height:16.50px;border-radius:50%;background:#2bb1ff;"></div>
<div class="t" style="left:860.04px;top:999.09px;font-size:19.5px;color:#171a22;letter-spacing:0.376px;">Informational</div>
<div class="t" style="left:1254.63px;top:999.09px;font-size:19.5px;color:#006dca;letter-spacing:0.942px;">52.4%</div>
<div class="t" style="left:1381.13px;top:999.09px;font-size:19.5px;color:#171a22;letter-spacing:0.850px;">929.4K</div>
<div class="t" style="left:1520.15px;top:999.09px;font-size:19.5px;color:#171a22;letter-spacing:0.940px;">1.3M</div>
<div style="position:absolute;left:810.50px;top:1032.30px;width:780.50px;height:1.30px;background:#e6e7ed;"></div>
<div style="position:absolute;left:836.70px;top:1048.45px;width:16.50px;height:16.50px;border-radius:50%;background:#a96ef6;"></div>
<div class="t" style="left:860.24px;top:1048.74px;font-size:19.5px;color:#171a22;letter-spacing:0.391px;">Navigational</div>
<div class="t" style="left:1266.21px;top:1048.74px;font-size:19.5px;color:#006dca;letter-spacing:1.003px;">5.2%</div>
<div class="t" style="left:1410.23px;top:1048.74px;font-size:19.5px;color:#171a22;letter-spacing:1.174px;">93K</div>
<div class="t" style="left:1520.10px;top:1048.74px;font-size:19.5px;color:#171a22;letter-spacing:0.956px;">3.4M</div>
<div style="position:absolute;left:810.50px;top:1082.15px;width:780.50px;height:1.30px;background:#e6e7ed;"></div>
<div style="position:absolute;left:836.70px;top:1098.10px;width:16.50px;height:16.50px;border-radius:50%;background:#ffbe3d;"></div>
<div class="t" style="left:860.82px;top:1098.39px;font-size:19.5px;color:#171a22;letter-spacing:0.409px;">Commercial</div>
<div class="t" style="left:1254.65px;top:1098.39px;font-size:19.5px;color:#006dca;letter-spacing:0.938px;">21.1%</div>
<div class="t" style="left:1381.12px;top:1098.39px;font-size:19.5px;color:#171a22;letter-spacing:0.852px;">374.9K</div>
<div class="t" style="left:1520.15px;top:1098.39px;font-size:19.5px;color:#171a22;letter-spacing:0.940px;">1.1M</div>
<div style="position:absolute;left:810.50px;top:1132.00px;width:780.50px;height:1.30px;background:#e6e7ed;"></div>
<div style="position:absolute;left:836.70px;top:1147.75px;width:16.50px;height:16.50px;border-radius:50%;background:#59dba6;"></div>
<div class="t" style="left:861.41px;top:1148.04px;font-size:19.5px;color:#171a22;letter-spacing:0.266px;">Transactional</div>
<div class="t" style="left:1254.65px;top:1148.04px;font-size:19.5px;color:#006dca;letter-spacing:0.938px;">21.3%</div>
<div class="t" style="left:1381.12px;top:1148.04px;font-size:19.5px;color:#171a22;letter-spacing:0.852px;">377.2K</div>
<div class="t" style="left:1520.08px;top:1148.04px;font-size:19.5px;color:#171a22;letter-spacing:0.965px;">4.3M</div>
<div style="position:absolute;left:810.50px;top:1181.85px;width:780.50px;height:1.30px;background:#e6e7ed;"></div>
<div style="position:absolute;left:837.10px;top:1210.30px;width:160.90px;height:36.60px;border-radius:6px;background:#0a8ef8;"></div>
<div class="t" style="left:849.90px;top:1219.29px;font-size:19.5px;color:#fff;font-weight:700;letter-spacing:-0.294px;">View full report</div>
<div style="position:absolute;left:0.00px;top:1263.00px;width:1600.00px;height:51.00px;background:linear-gradient(to bottom, rgba(255,255,255,0) 0%, rgba(255,255,255,0.78) 74%, rgba(255,255,255,0.9) 100%);"></div>
</body></html>
